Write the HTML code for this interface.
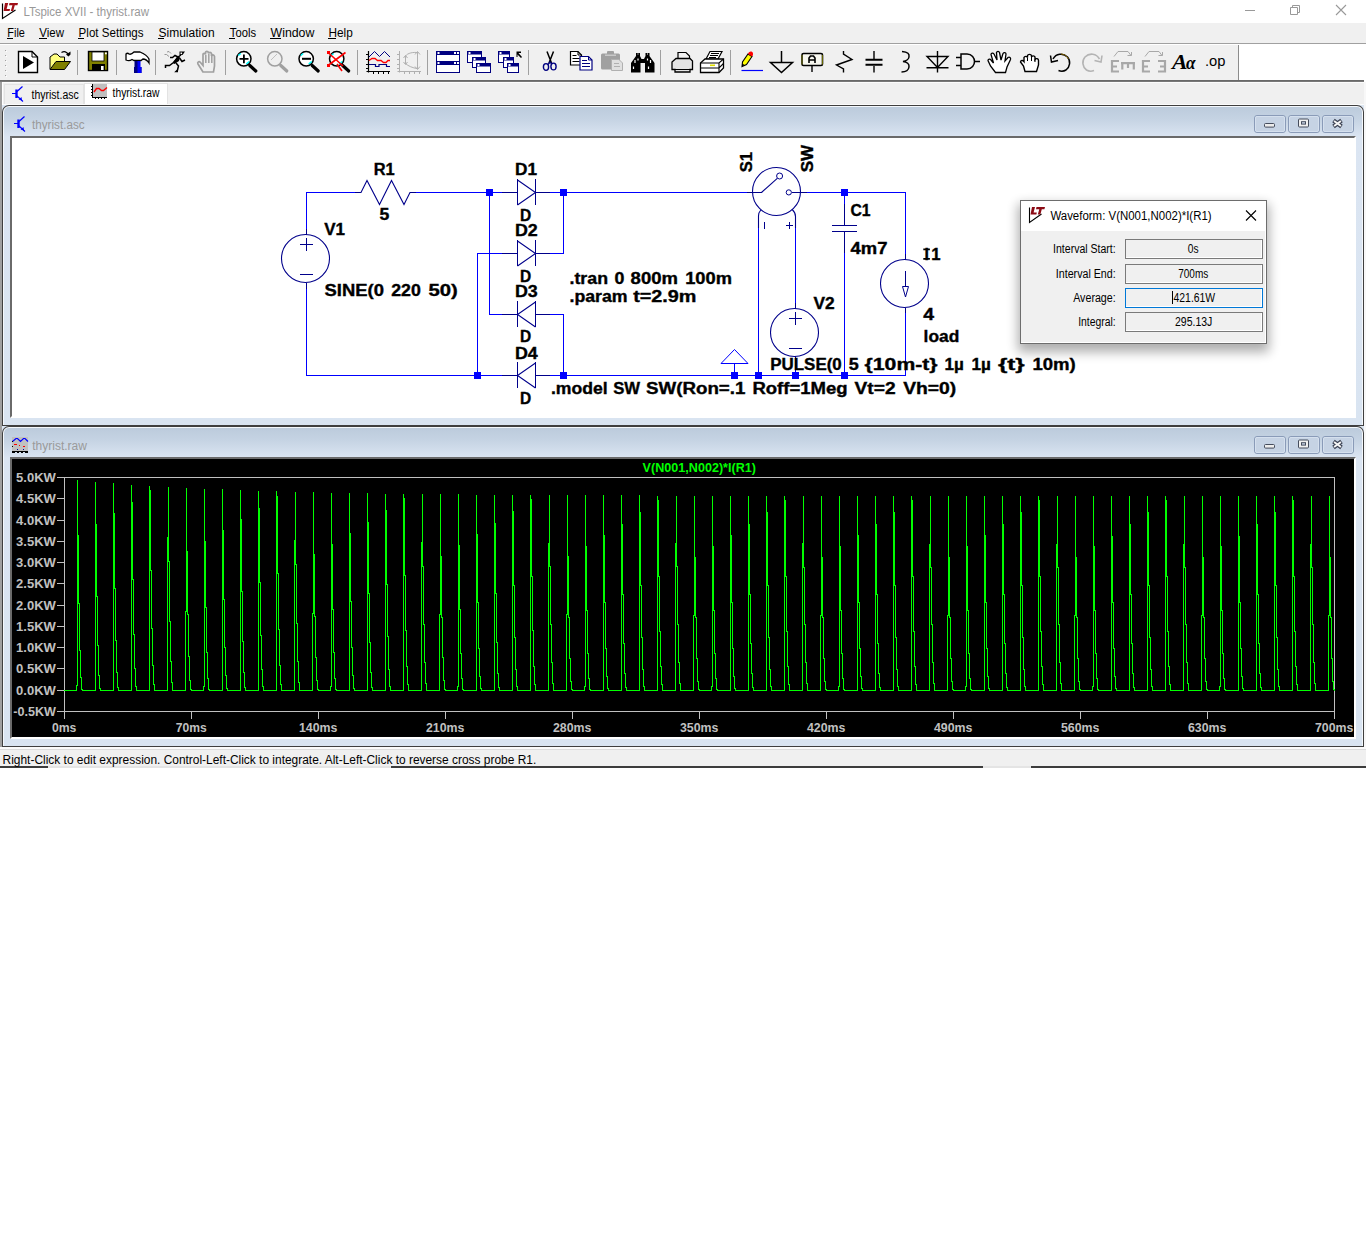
<!DOCTYPE html>
<html><head><meta charset="utf-8"><title>LTspice XVII - thyrist.raw</title>
<style>
*{box-sizing:border-box;margin:0;padding:0}
html,body{width:1366px;height:1255px;overflow:hidden;background:#fff}
body{position:relative;font-family:"Liberation Sans",sans-serif;font-size:12px;color:#000}
.abs{position:absolute}
.t{position:absolute;white-space:nowrap;line-height:1}
svg{position:absolute;left:0;top:0;overflow:visible}
svg text{font-family:"Liberation Sans",sans-serif}
#titlebar{position:absolute;left:0;top:0;width:1366px;height:23px;background:#fff}
#menubar{position:absolute;left:0;top:23px;width:1366px;height:20px;background:#f0f0f0}
.mi{position:absolute;top:7px;font-size:12.5px;line-height:1;white-space:nowrap}
.mi u{text-decoration:none;border-bottom:1px solid #000;padding-bottom:0px}
#tbar{position:absolute;left:0;top:45px;width:1366px;height:35px;background:#f0f0f0}
#tabs{position:absolute;left:0;top:82px;width:1366px;height:23px;background:#f0f0f0}
#mdi{position:absolute;left:0;top:105px;width:1366px;height:643px;background:#dbe5f2}
.cw{position:absolute;border-radius:7px 7px 0 0}
.cwbtn{position:absolute;top:10px;width:32px;height:17px;border:1px solid #8e9db1;border-radius:3px;background:linear-gradient(#c9d6e6,#c4d2e4)}
.dl{position:absolute;font-size:11px;line-height:1;white-space:nowrap;text-align:right;width:100px}
.df{position:absolute;left:1125px;width:138px;height:20px;border:1px solid #7a7a7a;background:#f0f0f0;font-size:11px;line-height:18px;text-align:center}
</style></head><body>

<div id="titlebar"></div>
<div id="menubar"></div>
<div class="abs" style="left:0;top:43px;width:1366px;height:1px;background:#a0a0a0"></div>
<div class="abs" style="left:0;top:44px;width:1366px;height:1px;background:#fff"></div>
<div id="tbar"></div>
<div class="abs" style="left:1239px;top:45px;width:127px;height:35px;background:#fff"></div>
<div class="abs" style="left:1238px;top:45px;width:1px;height:35px;background:#8c8c8c"></div>
<div class="abs" style="left:0;top:80px;width:1364px;height:1px;background:#696969"></div>
<div class="abs" style="left:0;top:81px;width:1364px;height:1px;background:#787878"></div>
<div id="tabs"></div>
<div class="abs" style="left:4px;top:84px;width:80px;height:20px;background:#f0f0f0;border:1px solid #e3e3e3;border-bottom:none"></div>
<div class="abs" style="left:84px;top:83px;width:84px;height:21px;background:#fff;border:1px solid #e3e3e3;border-bottom:none"></div>
<div class="abs" style="left:2px;top:82px;width:1364px;height:1px;background:#fcfcfc"></div>
<div class="abs" style="left:2px;top:104px;width:1364px;height:1px;background:#fcfcfc"></div>
<div id="mdi"></div>
<!-- outer frame edges of MDI -->
<div class="abs" style="left:0;top:82px;width:2px;height:666px;background:#a0a0a0"></div>
<div class="abs" style="left:2px;top:82px;width:1px;height:23px;background:#fff"></div>
<div class="abs" style="left:1364px;top:82px;width:2px;height:666px;background:#f8f8f8"></div>

<!-- child window 1 -->
<div class="cw" style="left:2px;top:105px;width:1362px;height:321px;background:#3f3f3f"></div>
<div class="cw" style="left:3px;top:106px;width:1360px;height:319px;background:#f4f8fc;border-radius:6px 6px 0 0"></div>
<div class="cw" style="left:4px;top:107px;width:1358px;height:318px;border-radius:5px 5px 0 0;background:linear-gradient(#bccbdc 0px,#c5d3e3 12px,#dbe5f2 30px,#d9e4f1 100%)"></div>
<div class="abs" style="left:10px;top:136px;width:1346px;height:282px;background:#fff;border:2px solid #fff;border-top-color:#6a6a6a;border-left-color:#6a6a6a"></div>
<!-- child window 2 -->
<div class="cw" style="left:2px;top:426px;width:1362px;height:321px;background:#3f3f3f"></div>
<div class="cw" style="left:3px;top:427px;width:1360px;height:319px;background:#f4f8fc;border-radius:6px 6px 0 0"></div>
<div class="cw" style="left:4px;top:428px;width:1358px;height:318px;border-radius:5px 5px 0 0;background:linear-gradient(#bccbdc 0px,#c5d3e3 12px,#dbe5f2 30px,#d9e4f1 100%)"></div>
<div class="abs" style="left:10px;top:457px;width:1346px;height:282px;background:#fff;border:2px solid #fff;border-top-color:#6a6a6a;border-left-color:#6a6a6a"></div>
<div class="abs" style="left:12px;top:459px;width:1342px;height:278px;background:#000"></div>
<!-- bottom of mdi / status bar -->
<div class="abs" style="left:0;top:747px;width:1366px;height:2px;background:#fbfbfb"></div>
<div class="abs" style="left:0;top:749px;width:1366px;height:17px;background:#f0f0f0;border-top:1px solid #dcdcdc"></div>
<div class="abs" style="left:0;top:766px;width:1366px;height:2px;background:#e4e4e4"></div>
<div class="abs" style="left:0;top:766px;width:48px;height:2px;background:#3c3c3c"></div>
<div class="abs" style="left:391px;top:766px;width:592px;height:2px;background:#3c3c3c"></div>
<div class="abs" style="left:1031px;top:766px;width:335px;height:2px;background:#3c3c3c"></div>

<svg width="1366" height="1255" viewBox="0 0 1366 1255">
<g id="title">
<path d="M2.5 3.5 L2.5 18.5 L15.5 10" fill="none" stroke="#000" stroke-width="1.2"/>
<path d="M5 3 L8.2 3 L6.6 9 L10 9 L9.6 11 L3.6 11 Z" fill="#a01018"/>
<path d="M9.5 3 L18 3 L17.4 5.2 L14.8 5.2 L13.2 11 L10.8 11 L12.4 5.2 L9 5.2 Z" fill="#a01018"/>
<text x="23.4" y="15.8" font-size="12" fill="#999" font-weight="normal" text-anchor="start" textLength="125.6" lengthAdjust="spacingAndGlyphs" >LTspice XVII - thyrist.raw</text>
<path d="M1245 10.5 H1255" stroke="#999" stroke-width="1"/>
<path d="M1290.5 7.5 H1297.5 V14.5 H1290.5 Z M1292.5 7.5 V5.5 H1299.5 V12.5 H1297.5" fill="none" stroke="#999" stroke-width="1"/>
<path d="M1336 5 L1346 15 M1346 5 L1336 15" stroke="#999" stroke-width="1.1"/>
</g>
<text x="7.3" y="37" font-size="12.5" fill="#000" font-weight="normal" text-anchor="start" textLength="17.6" lengthAdjust="spacingAndGlyphs" >File</text>
<rect x="7" y="38" width="6" height="1" fill="#000" shape-rendering="crispEdges"/>
<text x="39.3" y="37" font-size="12.5" fill="#000" font-weight="normal" text-anchor="start" textLength="24.7" lengthAdjust="spacingAndGlyphs" >View</text>
<rect x="39" y="38" width="8" height="1" fill="#000" shape-rendering="crispEdges"/>
<text x="78.6" y="37" font-size="12.5" fill="#000" font-weight="normal" text-anchor="start" textLength="65.0" lengthAdjust="spacingAndGlyphs" >Plot Settings</text>
<rect x="78" y="38" width="6" height="1" fill="#000" shape-rendering="crispEdges"/>
<text x="158.5" y="37" font-size="12.5" fill="#000" font-weight="normal" text-anchor="start" textLength="56.1" lengthAdjust="spacingAndGlyphs" >Simulation</text>
<rect x="158" y="38" width="6" height="1" fill="#000" shape-rendering="crispEdges"/>
<text x="229.8" y="37" font-size="12.5" fill="#000" font-weight="normal" text-anchor="start" textLength="26.2" lengthAdjust="spacingAndGlyphs" >Tools</text>
<rect x="229" y="38" width="6" height="1" fill="#000" shape-rendering="crispEdges"/>
<text x="270.5" y="37" font-size="12.5" fill="#000" font-weight="normal" text-anchor="start" textLength="43.9" lengthAdjust="spacingAndGlyphs" >Window</text>
<rect x="270" y="38" width="11" height="1" fill="#000" shape-rendering="crispEdges"/>
<text x="328.5" y="37" font-size="12.5" fill="#000" font-weight="normal" text-anchor="start" textLength="24.3" lengthAdjust="spacingAndGlyphs" >Help</text>
<rect x="328" y="38" width="8" height="1" fill="#000" shape-rendering="crispEdges"/>
<rect x="5" y="50" width="1" height="1" fill="#a0a0a0"/><rect x="6" y="51" width="1" height="1" fill="#fff"/>
<rect x="5" y="55" width="1" height="1" fill="#a0a0a0"/><rect x="6" y="56" width="1" height="1" fill="#fff"/>
<rect x="5" y="60" width="1" height="1" fill="#a0a0a0"/><rect x="6" y="61" width="1" height="1" fill="#fff"/>
<rect x="5" y="65" width="1" height="1" fill="#a0a0a0"/><rect x="6" y="66" width="1" height="1" fill="#fff"/>
<rect x="5" y="70" width="1" height="1" fill="#a0a0a0"/><rect x="6" y="71" width="1" height="1" fill="#fff"/>
<rect x="5" y="75" width="1" height="1" fill="#a0a0a0"/><rect x="6" y="76" width="1" height="1" fill="#fff"/>
<rect x="77" y="50" width="1" height="25" fill="#a0a0a0"/>
<rect x="116" y="50" width="1" height="25" fill="#a0a0a0"/>
<rect x="155" y="50" width="1" height="25" fill="#a0a0a0"/>
<rect x="225" y="50" width="1" height="25" fill="#a0a0a0"/>
<rect x="357" y="50" width="1" height="25" fill="#a0a0a0"/>
<rect x="427" y="50" width="1" height="25" fill="#a0a0a0"/>
<rect x="528" y="50" width="1" height="25" fill="#a0a0a0"/>
<rect x="660" y="50" width="1" height="25" fill="#a0a0a0"/>
<rect x="730" y="50" width="1" height="25" fill="#a0a0a0"/>
<g transform="translate(18,51)"><path d="M0.5 0.5 H14 L19.5 6 V21.5 H0.5 Z" fill="#fff" stroke="#000" stroke-width="1.4"/><path d="M14 0.5 V6 H19.5" fill="none" stroke="#000" stroke-width="1"/><path d="M5 5 L16 11.5 L5 18 Z" fill="#000"/></g>
<g transform="translate(49,51)"><path d="M1 18 V6 L5 3 H8 L11 6 H15.5 V10" fill="#ffff80" stroke="#000" stroke-width="1"/><path d="M1 18.5 L7 10.5 H21.5 L15.5 18.5 Z" fill="#808000" stroke="#000" stroke-width="1"/><path d="M12.5 1.5 C15 0,18 0.5,19.5 4" fill="none" stroke="#000" stroke-width="1.2"/><path d="M17 3.5 H21.5 V0.5 Z M21.5 3.5 L19.5 5.5 L17 3.5" fill="#000"/></g>
<g transform="translate(88,51)"><rect x="0.5" y="0.5" width="19" height="19" fill="#808000" stroke="#000" stroke-width="1.4"/><rect x="4" y="1" width="12" height="9" fill="#fff" stroke="#000" stroke-width="0.8"/><rect x="4" y="13" width="13" height="6.5" fill="#000"/><rect x="13" y="15" width="2.6" height="4" fill="#fff"/><rect x="17" y="1.5" width="1.8" height="1.8" fill="#fff"/></g>
<g transform="translate(125,51)"><path d="M1 3 C2 2,3 2,4 3 C6 4,7 3,9 1 H15 C20 3,23 6,24 8 V12 C22 9,20 8,18 8 L16 9.5 H9 L7 8.5 C5 10,3 10,1 9 Z" fill="#fff" stroke="#000" stroke-width="1.3"/><rect x="9.5" y="10" width="3.5" height="12" fill="#000080"/><rect x="12.5" y="10" width="3" height="12" fill="#0000ff"/><rect x="9" y="16" width="7.5" height="6" fill="#000080"/><rect x="12.5" y="16" width="4" height="6" fill="#0000ff"/></g>
<g transform="translate(164.5,51)"><path d="M15 0.5 H20.5 L18 4 H15 Z" fill="#000"/><rect x="16" y="1.5" width="1.6" height="1.6" fill="#fff"/><path d="M16.5 4 L13.5 6 L9 11.5 L5 14.5 L1 14.5 V17 M13.5 6 L10.5 4.5 L8 6.5 H5.5 M15 7 L17.5 10.5 L20.5 9 M11.5 12 L14 15 L13 19 L11.5 20.5 H13.5" fill="none" stroke="#000" stroke-width="1.5"/><path d="M12.5 6 L15.5 5.5 L14.5 10 L10 13 L8.5 12 Z" fill="#000"/><path d="M2.5 1 L4.5 0.5 L6.5 2.5 M0 3.5 L2 3.5 L4.5 5.5" fill="none" stroke="#808080" stroke-width="0.8"/></g>
<g transform="translate(197,51)"><path d="M6 21 L1 13 C0 11,2 10,3.5 11.5 L6 14.5 V3.5 C6 2,8 2,8.5 3.5 V1.5 C8.5 0,11 0,11.5 1.5 V2.5 C12 1,14 1,14.5 2.5 V5 C15 3.5,17 3.5,17.5 5.5 V15 L16.5 21 Z" fill="none" stroke="#a0a0a0" stroke-width="1.7"/><path d="M8.8 4 V12 M11.8 3 V12 M14.8 4.5 V12" stroke="#a0a0a0" stroke-width="1.5"/></g>
<circle cx="243.8" cy="58.8" r="7.2" fill="#fff" stroke="#000" stroke-width="1.5"/><path d="M238.3 55.5 L240.8 53.5 M246.3 64 L249.3 61.5" stroke="#00ffff" stroke-width="1.6"/><path d="M249.8 65.5 L255.8 71" stroke="#000" stroke-width="3.2" stroke-linecap="round"/><path d="M239.5 58.8 H248.5 M243.9 54.5 V63.2" stroke="#000" stroke-width="1.8"/>
<circle cx="274.8" cy="58.8" r="7.2" fill="#f0f0f0" stroke="#a0a0a0" stroke-width="1.5"/><path d="M280.8 65.5 L286.8 71" stroke="#a0a0a0" stroke-width="3.2" stroke-linecap="round"/><path d="M271 60 L277 54" stroke="#c0c0c0" stroke-width="1"/>
<circle cx="306.2" cy="58.8" r="7.2" fill="#fff" stroke="#000" stroke-width="1.5"/><path d="M300.7 55.5 L303.2 53.5 M308.7 64 L311.7 61.5" stroke="#00ffff" stroke-width="1.6"/><path d="M312.2 65.5 L318.2 71" stroke="#000" stroke-width="3.2" stroke-linecap="round"/><path d="M302 58.8 H311" stroke="#000" stroke-width="2"/>
<circle cx="336.7" cy="58.8" r="7.2" fill="#fff" stroke="#000" stroke-width="1.5"/><path d="M331.2 55.5 L333.7 53.5 M339.2 64 L342.2 61.5" stroke="#00ffff" stroke-width="1.6"/><path d="M342.7 65.5 L348.7 71" stroke="#000" stroke-width="3.2" stroke-linecap="round"/><path d="M328 52.5 L343 66 M345.5 52.5 L328 65.5 M337 64 L342 71" stroke="#ff0000" stroke-width="1.6"/><rect x="327" y="51" width="3" height="3" fill="#f00"/><rect x="327" y="64" width="3" height="3" fill="#f00"/>
<g transform="translate(366,51)"><path d="M2.5 0 V21.5 M0.5 20.5 H24" stroke="#000" stroke-width="1.2" fill="none"/><path d="M0 3.5h2M0 8.5h2M0 13.5h2M0 17.5h2M7.5 21v2M12.5 21v2M17.5 21v2M22.5 21v2" stroke="#000" stroke-width="1"/><path d="M3 6 L8.5 0.5 L13.5 5.5 L18.5 0.5 L24 6" stroke="#000080" stroke-width="1" fill="none"/><path d="M3 9.5 L6 7.5 H9 L11.5 9.5 H15 L17.5 11.5 H20 L22 9.5 H24" stroke="#ff0000" stroke-width="1.3" fill="none"/><path d="M3 13.5 H9.5 V15.5 H13 V13.5 H20.5 V15.5 H24" stroke="#000080" stroke-width="1.2" fill="none"/></g>
<g transform="translate(397,51)"><path d="M2.5 0 V21.5 M0.5 20.5 H24" stroke="#b0b0b0" stroke-width="1" fill="none"/><path d="M0 3.5h2M0 8.5h2M0 13.5h2M0 17.5h2M7.5 21v2M12.5 21v2M17.5 21v2M22.5 21v2" stroke="#b0b0b0" stroke-width="1"/><path d="M20.5 1 V18 M18 3.5 L20.5 0.5 L23 3.5 M18 15.5 L20.5 18.5 L23 15.5 M8.5 5 V13 M6.5 7 L8.5 4.5 L10.5 7 M6.5 11 L8.5 13.5 L10.5 11 M20 1.5 C14 1,9 3,8 6 M8.5 12.5 C11 15,16 17,20 17.5" stroke="#b0b0b0" stroke-width="1" fill="none"/></g>
<g transform="translate(436,51)"><rect x="0.5" y="0.5" width="23" height="10" fill="#fff" stroke="#000080" stroke-width="1"/><rect x="0" y="0" width="24" height="4" fill="#000080"/><rect x="0.5" y="10.5" width="23" height="11" fill="#fff" stroke="#000080" stroke-width="1"/><rect x="0" y="10" width="24" height="4" fill="#000080"/><rect x="1.5" y="1" width="2" height="2" fill="#fff"/><rect x="18" y="1" width="2" height="2" fill="#fff"/><rect x="21" y="1" width="2" height="2" fill="#fff"/><rect x="1.5" y="11" width="2" height="2" fill="#fff"/><rect x="18" y="11" width="2" height="2" fill="#fff"/><rect x="21" y="11" width="2" height="2" fill="#fff"/></g>
<g transform="translate(467,51)"><rect x="0.5" y="0.5" width="14" height="11" fill="#fff" stroke="#000080" stroke-width="1"/><rect x="0" y="0" width="15" height="3.5" fill="#000080"/><rect x="5.5" y="6.5" width="13" height="10" fill="#fff" stroke="#000080" stroke-width="1"/><rect x="5" y="6" width="14" height="3.5" fill="#000080"/><rect x="9.5" y="12.5" width="14" height="9" fill="#fff" stroke="#000080" stroke-width="1"/><rect x="9" y="12" width="15" height="3.5" fill="#000080"/><rect x="1.5" y="1" width="2" height="2" fill="#fff"/><rect x="6.5" y="7" width="2" height="2" fill="#fff"/><rect x="10.5" y="13" width="2" height="2" fill="#fff"/></g>
<g transform="translate(498,51)"><rect x="0.5" y="0.5" width="11" height="11" fill="#fff" stroke="#000080" stroke-width="1"/><rect x="0" y="0" width="12" height="3.5" fill="#000080"/><rect x="5.5" y="6.5" width="10" height="10" fill="#fff" stroke="#000080" stroke-width="1"/><rect x="5" y="6" width="11" height="3.5" fill="#000080"/><rect x="9.5" y="12.5" width="11" height="9" fill="#fff" stroke="#000080" stroke-width="1"/><rect x="9" y="12" width="12" height="3.5" fill="#000080"/><rect x="1.5" y="1" width="2" height="2" fill="#fff"/><rect x="6.5" y="7" width="2" height="2" fill="#fff"/><rect x="10.5" y="13" width="2" height="2" fill="#fff"/><path d="M18.5 0.5 H23 V2 H20.5 L24 6 L23 7 L19.5 3.5 V6 H18.5 Z" fill="#000"/></g>
<g transform="translate(543,51)"><path d="M4 0.5 L8.5 12 M10.5 0.5 L6 12" stroke="#000" stroke-width="1.5" fill="none"/><ellipse cx="3" cy="16" rx="2.6" ry="3.4" fill="none" stroke="#000080" stroke-width="1.4"/><ellipse cx="10.5" cy="15.5" rx="2.6" ry="3.4" fill="none" stroke="#000080" stroke-width="1.4"/><path d="M5 13.5 L7 11 L9 13" stroke="#000080" stroke-width="1.3" fill="none"/></g>
<g transform="translate(570,51)"><path d="M0.5 0.5 H8 L11.5 4 V14.0 H0.5 Z" fill="#fff" stroke="#000" stroke-width="1.2"/><path d="M8 0.5 V4 H11.5" fill="none" stroke="#000" stroke-width="1"/><path d="M2.5 4.5 h4 M2.5 7.5 h7 M2.5 10.5 h7" stroke="#000" stroke-width="1"/><path d="M10.0 5.5 H18.5 L22.0 9 V19.0 H10.0 Z" fill="#fff" stroke="#000080" stroke-width="1.2"/><path d="M18.5 5.5 V9 H22.0" fill="none" stroke="#000080" stroke-width="1"/><path d="M12.0 9.5 h5 M12.0 12.5 h8 M12.0 15.5 h8" stroke="#000080" stroke-width="1"/></g>
<g transform="translate(601,51)"><rect x="0" y="2.5" width="19" height="16" rx="1.5" fill="#a0a0a0"/><rect x="6" y="0" width="7" height="4" rx="1" fill="#a0a0a0"/><rect x="4" y="3.5" width="11" height="1.5" fill="#c8c8c8"/><path d="M10.5 8.5 H18 L21.5 12 V19.5 H10.5 Z" fill="#e0e0e0" stroke="#b0b0b0" stroke-width="1"/><path d="M13 12.5 h5 M13 15.5 h6" stroke="#b0b0b0" stroke-width="1"/></g>
<g transform="translate(631,52)"><path d="M5 1 H9 V4 L10.5 7 H13 L14.5 4 V1 H18.5 V4 L23.5 11 V20.5 H14 V11 H9.5 V20.5 H0 V11 L5 4 Z" fill="#000"/><path d="M6.5 2h1M16 2h1M4 8v3M7 6.5v2M16.5 6.5v2M19.5 8v3M2.5 14.5v2.5M17.5 14.5v2.5" stroke="#fff" stroke-width="1.2"/></g>
<g transform="translate(671,52)"><path d="M7 0.5 H15 L18.5 4 V8 H7 Z" fill="#f2f2f2" stroke="#000" stroke-width="1.2"/><path d="M1 17.5 V10 L5 6.5 H19 L21.5 9 V17.5 H19 V20 H4 V17.5 Z" fill="#e4e4e4" stroke="#000" stroke-width="1.3"/><path d="M4 17.5 H19" stroke="#000" stroke-width="1"/></g>
<g transform="translate(700,51)"><path d="M6 8 L10 0.5 H22 L18 8 Z" fill="#fff" stroke="#000" stroke-width="1.2"/><path d="M11 2.5h8M10 4.5h8M9 6.5h7" stroke="#000" stroke-width="1"/><path d="M0.5 21.5 V12 L5 8 H23.5 V17 L19 21.5 Z" fill="#fff" stroke="#000" stroke-width="1.3"/><path d="M0.5 12 H19 L23.5 8 M19 12 V21.5 M0.5 17 H19 L23.5 12.5" fill="none" stroke="#000" stroke-width="1.1"/><rect x="10" y="13.5" width="5" height="1.6" fill="#e0e000"/></g>
<g transform="translate(741,51)"><path d="M0.5 19.5 H22" stroke="#0000ff" stroke-width="1.2"/><path d="M1 15.5 L1.5 11 L7 3 L11 5.5 L5.5 13.5 Z" fill="#ffff00" stroke="#000" stroke-width="1.1"/><path d="M1 15.5 L1.3 12.5 L3.5 14 Z" fill="#000"/><path d="M7 3 C7.5 0,11.5 -0.5,12 2.5 C12.2 4,11.5 5,11 5.5 Z" fill="#ff0000"/></g>
<g transform="translate(770,51)"><path d="M11.5 0 V11 M0.5 11.5 H22.5 L11.5 21.5 Z" stroke="#000" fill="none" stroke-width="1.5"/></g>
<g transform="translate(801,51)"><rect x="1" y="2.5" width="20.5" height="12" rx="1.5" fill="#f8f8f0" stroke="#000" stroke-width="1.6"/><path d="M1 4 V13.5 M21.5 4 V13.5" stroke="#808000" stroke-width="0.8"/><path d="M11 14.5 V21" stroke="#000" fill="none" stroke-width="1.4"/><path d="M8 12 V7 L9.5 5 H12.5 L14 7 V12 M8 9 H14" stroke="#000" fill="none" stroke-width="1.6"/></g>
<g transform="translate(835,51)"><path d="M8.5 0 V3 L17 8.5 L1.5 14 L8.5 18 V21.5" stroke="#000" fill="none" stroke-width="1.4"/></g>
<g transform="translate(865,51)"><path d="M9 0 V8 M9 15 V21.5" stroke="#000" fill="none" stroke-width="1.4"/><path d="M0.5 8.7 H17.5 M0.5 13.8 H17.5" stroke="#000" fill="none" stroke-width="2"/></g>
<g transform="translate(900,51)"><path d="M2 0.5 C8 1,9.5 3,9 6 C8.5 9,6 10,3 10.5 C7 11,9.5 13,9 16 C8.5 19.5,5 21,1.5 21" stroke="#000" fill="none" stroke-width="1.5"/></g>
<g transform="translate(926,51)"><path d="M11.5 0 V21.5 M1 5.5 H22 L11.5 16.5 Z M0.5 16.7 H22.5" stroke="#000" fill="none" stroke-width="1.4"/></g>
<g transform="translate(956,51)"><path d="M0 6.5 H5 M0 14.5 H5 M18 10.5 H24" stroke="#000" fill="none" stroke-width="1.5"/><path d="M5 3 H11 C16 3,18.5 7,18.5 10.5 C18.5 14,16 18,11 18 H5 Z" fill="#f0f0f0" stroke="#000" stroke-width="1.5"/></g>
<g transform="translate(987.5,51)"><path d="M8 21.5 L3 15 L0.5 9.5 C0.5 8,2.5 7.5,3.5 9 L6 12 L3.5 3.5 C3.5 2,5.5 1.5,6.5 3 L9.5 9 L9 1.5 C9.5 0,11.5 0,12 1.5 L13.5 9 L15.5 2.5 C16.5 1,18.5 1.5,18.5 3 L17.5 10 L20.5 6.5 C22 5.5,23.5 7,23 8.5 L19.5 16 L18 21.5 Z" fill="#fff" stroke="#000" stroke-width="1.3"/></g>
<g transform="translate(1020,52)"><path d="M5 19.5 L3.5 14 L0.5 10 C0.5 8,3 8,4 9.5 V5.5 C4.5 4,7 4,7.5 5.5 V3.5 C8 2,11 2,11.5 3.5 V5 C12 3.5,14.5 3.5,15 5 V7.5 C16 6,18.5 6.5,18.5 8.5 V13 L16.5 19.5 Z" fill="#fff" stroke="#000" stroke-width="1.4"/><path d="M7.5 5.5 V9 M11.5 5 V9 M15 7.5 V10" stroke="#000" stroke-width="1"/></g>
<g transform="translate(1050,51)"><path d="M3 8 C6 2.5,13 1.5,17.5 6 C21 10,20 16,16 19 C13.5 20.5,11 20.5,8.5 19.5" fill="none" stroke="#000" stroke-width="1.5"/><path d="M0.5 4.5 L1.5 11 L8 9.5" fill="none" stroke="#000" stroke-width="1.5"/><path d="M11 3 C14 3,17 5,18.5 8" fill="none" stroke="#806000" stroke-width="1"/></g>
<g transform="translate(1082,51)"><path d="M17.5 8 C14.5 2.5,7.5 1.5,3 6 C-0.5 10,0.5 16,4.5 19 C7 20.5,9.5 20.5,12 19.5" fill="none" stroke="#b4b4b4" stroke-width="1.6"/><path d="M20 4.5 L19 11 L12.5 9.5" fill="none" stroke="#b4b4b4" stroke-width="1.6"/></g>
<g transform="translate(1110,51)"><path d="M4 5.5 L8 0.5 H18 L21 4.5 M17.5 4.5 H21.5 V1" fill="none" stroke="#a8a8a8" stroke-width="1"/><path d="M2 9 V21.5 M1 10 H9 M1 15.5 H7 M1 20.5 H9" stroke="#a8a8a8" stroke-width="2.2" fill="none"/><path d="M11 12.2 H25 M12.3 11.2 V18.5 M18 11.2 V17 M23.8 11.2 V18.5" stroke="#a8a8a8" stroke-width="2.2" fill="none"/></g>
<g transform="translate(1142,51)"><path d="M3 5.5 L7 0.5 H17 L20 4.5 M16.5 4.5 H20.5 V1" fill="none" stroke="#a8a8a8" stroke-width="1"/><path d="M1 9 V21.5 M0 10 H8 M0 15.5 H6 M0 20.5 H8" stroke="#a8a8a8" stroke-width="2.2" fill="none"/><path d="M23 9 V21.5 M24 10 H16 M24 15.5 H18 M24 20.5 H16" stroke="#a8a8a8" stroke-width="2.2" fill="none"/></g>
<text x="1172" y="69.4" font-style="italic" font-weight="bold" font-size="22" textLength="15.5" lengthAdjust="spacingAndGlyphs" style="font-family:'Liberation Serif',serif">A</text>
<text x="1186" y="69.4" font-style="italic" font-weight="bold" font-size="18" textLength="9.5" lengthAdjust="spacingAndGlyphs" style="font-family:'Liberation Serif',serif">α</text>
<text x="1205" y="65.7" font-size="14.5" fill="#000" font-weight="normal" text-anchor="start" textLength="20.5" lengthAdjust="spacingAndGlyphs" >.op</text>
<g transform="translate(12,86)" stroke="#0000ff" fill="none"><path d="M0 7.5 H4" stroke-width="1"/><path d="M4.5 3.5 V12" stroke-width="2.4"/><path d="M5 5.5 L10.5 0.5 M5 10 L11 15.5" stroke-width="1.2"/><path d="M6.5 13.5 L9.5 11 L10 14.5 Z" fill="#0000ff" stroke="none"/></g>
<text x="31.5" y="98.7" font-size="12" fill="#000" font-weight="normal" text-anchor="start" textLength="47.2" lengthAdjust="spacingAndGlyphs" >thyrist.asc</text>
<g transform="translate(91,84)"><rect x="2" y="0" width="14" height="13" fill="#c0c0c0"/><path d="M1.5 0 V14 M1 13.5 H16" stroke="#000" stroke-width="1" fill="none"/><path d="M0 2.5h1M0 5.5h1M0 8.5h1M0 11.5h1M4.5 14v1M7.5 14v1M10.5 14v1M13.5 14v1" stroke="#000" stroke-width="1"/><path d="M3 8 L5.5 4.5 L8 4.5 L10.5 6.5 L12.5 6.5 L16 3.5" stroke="#ff0000" stroke-width="1.4" fill="none"/></g>
<text x="112.6" y="96.7" font-size="12" fill="#000" font-weight="normal" text-anchor="start" textLength="46.8" lengthAdjust="spacingAndGlyphs" >thyrist.raw</text>
<g transform="translate(14,116)" stroke="#0000ff" fill="none"><path d="M0 7.5 H4" stroke-width="1"/><path d="M4.5 3.5 V12" stroke-width="2.4"/><path d="M5 5.5 L10.5 0.5 M5 10 L11 15.5" stroke-width="1.2"/><path d="M6.5 13.5 L9.5 11 L10 14.5 Z" fill="#0000ff" stroke="none"/></g>
<text x="32" y="128.6" font-size="12" fill="#9a9a9a" font-weight="normal" text-anchor="start" textLength="52.6" lengthAdjust="spacingAndGlyphs" >thyrist.asc</text>
<g transform="translate(12,437)"><rect x="0" y="0" width="16" height="14" fill="#c0c0c0"/><path d="M0.5 4.5 L4 1.5 L5.5 1.5 L8.5 4.5 L11.5 1.5 L13 1.5 L16 4.5" stroke="#0000ff" stroke-width="1.2" fill="none"/><rect x="0" y="4" width="1" height="1" fill="#000"/><rect x="0" y="9" width="1" height="1" fill="#000"/><rect x="2" y="7" width="3" height="1" fill="#f00"/><rect x="7" y="8" width="1" height="1" fill="#f00"/><rect x="11" y="9" width="2" height="1" fill="#f00"/><rect x="5" y="12" width="1" height="1" fill="#00a"/><rect x="11" y="12" width="1" height="1" fill="#00a"/><rect x="0" y="14" width="16" height="1" fill="#000"/><path d="M0 15.5h3M5 15.5h2M9 15.5h2M13 15.5h3" stroke="#000" stroke-width="1"/></g>
<text x="32.2" y="450" font-size="12" fill="#9a9a9a" font-weight="normal" text-anchor="start" textLength="54.8" lengthAdjust="spacingAndGlyphs" >thyrist.raw</text>
<rect x="1254.5" y="115.5" width="31" height="17" rx="2.5" fill="#c6d3e4" stroke="#8a9bb8"/><rect x="1255.5" y="116.5" width="29" height="15" rx="1.5" fill="none" stroke="#d5e0ee" stroke-width="1"/><rect x="1264.5" y="123.5" width="10" height="3.6" rx="1" fill="#ececec" stroke="#454c5c" stroke-width="1"/><rect x="1288.5" y="115.5" width="31" height="17" rx="2.5" fill="#c6d3e4" stroke="#8a9bb8"/><rect x="1289.5" y="116.5" width="29" height="15" rx="1.5" fill="none" stroke="#d5e0ee" stroke-width="1"/><rect x="1298.5" y="119" width="10" height="8" rx="1" fill="#f0f0f0" stroke="#454c5c" stroke-width="1"/><rect x="1301.5" y="121.7" width="4" height="2.4" fill="#c6d3e4" stroke="#454c5c" stroke-width="1"/><rect x="1322.5" y="115.5" width="31" height="17" rx="2.5" fill="#c6d3e4" stroke="#8a9bb8"/><rect x="1323.5" y="116.5" width="29" height="15" rx="1.5" fill="none" stroke="#d5e0ee" stroke-width="1"/><path d="M1333.5 120.5 L1341.5 126.5 M1341.5 120.5 L1333.5 126.5" stroke="#3a4152" stroke-width="4.2"/><path d="M1334.1 120.95 L1340.9 126.05 M1340.9 120.95 L1334.1 126.05" stroke="#f4f4f4" stroke-width="2"/>
<rect x="1254.5" y="436.5" width="31" height="17" rx="2.5" fill="#c6d3e4" stroke="#8a9bb8"/><rect x="1255.5" y="437.5" width="29" height="15" rx="1.5" fill="none" stroke="#d5e0ee" stroke-width="1"/><rect x="1264.5" y="444.5" width="10" height="3.6" rx="1" fill="#ececec" stroke="#454c5c" stroke-width="1"/><rect x="1288.5" y="436.5" width="31" height="17" rx="2.5" fill="#c6d3e4" stroke="#8a9bb8"/><rect x="1289.5" y="437.5" width="29" height="15" rx="1.5" fill="none" stroke="#d5e0ee" stroke-width="1"/><rect x="1298.5" y="440" width="10" height="8" rx="1" fill="#f0f0f0" stroke="#454c5c" stroke-width="1"/><rect x="1301.5" y="442.7" width="4" height="2.4" fill="#c6d3e4" stroke="#454c5c" stroke-width="1"/><rect x="1322.5" y="436.5" width="31" height="17" rx="2.5" fill="#c6d3e4" stroke="#8a9bb8"/><rect x="1323.5" y="437.5" width="29" height="15" rx="1.5" fill="none" stroke="#d5e0ee" stroke-width="1"/><path d="M1333.5 441.5 L1341.5 447.5 M1341.5 441.5 L1333.5 447.5" stroke="#3a4152" stroke-width="4.2"/><path d="M1334.1 441.95 L1340.9 447.05 M1340.9 441.95 L1334.1 447.05" stroke="#f4f4f4" stroke-width="2"/>
<text x="2.6" y="763.6" font-size="12" fill="#000" font-weight="normal" text-anchor="start" textLength="533.6" lengthAdjust="spacingAndGlyphs" >Right-Click to edit expression. Control-Left-Click to integrate. Alt-Left-Click to reverse cross probe R1.</text>
<g shape-rendering="crispEdges" stroke-width="1" fill="none">
<line x1="306.5" y1="192" x2="306.5" y2="229" stroke="#0000ff"/>
<line x1="306.5" y1="289" x2="306.5" y2="376" stroke="#0000ff"/>
<line x1="306" y1="192.5" x2="355" y2="192.5" stroke="#0000ff"/>
<line x1="416" y1="192.5" x2="502" y2="192.5" stroke="#0000ff"/>
<line x1="550" y1="192.5" x2="747" y2="192.5" stroke="#0000ff"/>
<line x1="807" y1="192.5" x2="906" y2="192.5" stroke="#0000ff"/>
<line x1="905.5" y1="192" x2="905.5" y2="254" stroke="#0000ff"/>
<line x1="905.5" y1="313" x2="905.5" y2="376" stroke="#0000ff"/>
<line x1="306" y1="375.5" x2="502" y2="375.5" stroke="#0000ff"/>
<line x1="550" y1="375.5" x2="906" y2="375.5" stroke="#0000ff"/>
<line x1="489.5" y1="192" x2="489.5" y2="315" stroke="#0000ff"/>
<line x1="489" y1="314.5" x2="502" y2="314.5" stroke="#0000ff"/>
<line x1="563.5" y1="192" x2="563.5" y2="254" stroke="#0000ff"/>
<line x1="550" y1="253.5" x2="564" y2="253.5" stroke="#0000ff"/>
<line x1="477.5" y1="253" x2="477.5" y2="376" stroke="#0000ff"/>
<line x1="477" y1="253.5" x2="502" y2="253.5" stroke="#0000ff"/>
<line x1="550" y1="314.5" x2="564" y2="314.5" stroke="#0000ff"/>
<line x1="563.5" y1="314" x2="563.5" y2="376" stroke="#0000ff"/>
<line x1="758.5" y1="228" x2="758.5" y2="376" stroke="#0000ff"/>
<line x1="795.5" y1="228" x2="795.5" y2="303" stroke="#0000ff"/>
<line x1="795.5" y1="368" x2="795.5" y2="376" stroke="#0000ff"/>
<line x1="844.5" y1="192" x2="844.5" y2="204" stroke="#0000ff"/>
<line x1="844.5" y1="253" x2="844.5" y2="376" stroke="#0000ff"/>
<line x1="734.5" y1="363" x2="734.5" y2="376" stroke="#0000ff"/>
<path d="M734.5 349.5 L721 363.5 H748 Z" stroke="#0000ff" fill="none" shape-rendering="auto"/>
<rect x="486.0" y="189.0" width="7" height="7" fill="#0000ff"/>
<rect x="560.0" y="189.0" width="7" height="7" fill="#0000ff"/>
<rect x="841.0" y="189.0" width="7" height="7" fill="#0000ff"/>
<rect x="474.0" y="372.0" width="7" height="7" fill="#0000ff"/>
<rect x="560.0" y="372.0" width="7" height="7" fill="#0000ff"/>
<rect x="731.0" y="372.0" width="7" height="7" fill="#0000ff"/>
<rect x="755.0" y="372.0" width="7" height="7" fill="#0000ff"/>
<rect x="792.0" y="372.0" width="7" height="7" fill="#0000ff"/>
<rect x="841.0" y="372.0" width="7" height="7" fill="#0000ff"/>
<path d="M355 192.5 H361 L367 180.5 L379.5 204.5 L391.5 180.5 L404 204.5 L410 192.5 H416" stroke="#00008b" fill="none" shape-rendering="auto" stroke-width="1.1"/>
<circle cx="305.5" cy="258.5" r="24" stroke="#00008b" fill="none" shape-rendering="auto" stroke-width="1.1"/>
<line x1="306.5" y1="229.0" x2="306.5" y2="234.5" stroke="#00008b"/>
<line x1="306.5" y1="282.5" x2="306.5" y2="289.0" stroke="#00008b"/>
<line x1="300.0" y1="244.5" x2="313.0" y2="244.5" stroke="#00008b"/>
<line x1="306.5" y1="238.0" x2="306.5" y2="251.0" stroke="#00008b"/>
<line x1="300.0" y1="274.5" x2="313.0" y2="274.5" stroke="#00008b"/>
<circle cx="794.5" cy="332.5" r="24" stroke="#00008b" fill="none" shape-rendering="auto" stroke-width="1.1"/>
<line x1="795.5" y1="303.0" x2="795.5" y2="308.5" stroke="#00008b"/>
<line x1="795.5" y1="356.5" x2="795.5" y2="363.0" stroke="#00008b"/>
<line x1="789.0" y1="318.5" x2="802.0" y2="318.5" stroke="#00008b"/>
<line x1="795.5" y1="312.0" x2="795.5" y2="325.0" stroke="#00008b"/>
<line x1="789.0" y1="348.5" x2="802.0" y2="348.5" stroke="#00008b"/>
<line x1="795.5" y1="356" x2="795.5" y2="368" stroke="#00008b"/>
<line x1="502" y1="192.5" x2="517" y2="192.5" stroke="#00008b"/>
<line x1="536" y1="192.5" x2="550" y2="192.5" stroke="#00008b"/>
<line x1="517.5" y1="179.0" x2="517.5" y2="205.0" stroke="#00008b"/>
<line x1="535.5" y1="179.0" x2="535.5" y2="205.0" stroke="#00008b"/>
<path d="M517.5 180.0 L535.5 192.5 L517.5 205.0" stroke="#00008b" fill="none" shape-rendering="auto" stroke-width="1.1"/>
<line x1="502" y1="253.5" x2="517" y2="253.5" stroke="#00008b"/>
<line x1="536" y1="253.5" x2="550" y2="253.5" stroke="#00008b"/>
<line x1="517.5" y1="240.0" x2="517.5" y2="266.0" stroke="#00008b"/>
<line x1="535.5" y1="240.0" x2="535.5" y2="266.0" stroke="#00008b"/>
<path d="M517.5 241.0 L535.5 253.5 L517.5 266.0" stroke="#00008b" fill="none" shape-rendering="auto" stroke-width="1.1"/>
<line x1="502" y1="314.5" x2="517" y2="314.5" stroke="#00008b"/>
<line x1="536" y1="314.5" x2="550" y2="314.5" stroke="#00008b"/>
<line x1="517.5" y1="301.0" x2="517.5" y2="327.0" stroke="#00008b"/>
<line x1="535.5" y1="301.0" x2="535.5" y2="327.0" stroke="#00008b"/>
<path d="M535.5 302.0 L517.5 314.5 L535.5 327.0" stroke="#00008b" fill="none" shape-rendering="auto" stroke-width="1.1"/>
<line x1="502" y1="375.5" x2="517" y2="375.5" stroke="#00008b"/>
<line x1="536" y1="375.5" x2="550" y2="375.5" stroke="#00008b"/>
<line x1="517.5" y1="362.0" x2="517.5" y2="388.0" stroke="#00008b"/>
<line x1="535.5" y1="362.0" x2="535.5" y2="388.0" stroke="#00008b"/>
<path d="M535.5 363.0 L517.5 375.5 L535.5 388.0" stroke="#00008b" fill="none" shape-rendering="auto" stroke-width="1.1"/>
<circle cx="776.5" cy="191.5" r="24" stroke="#00008b" fill="none" shape-rendering="auto" stroke-width="1.1"/>
<line x1="747" y1="192.5" x2="761.5" y2="192.5" stroke="#00008b"/>
<line x1="791.5" y1="192.5" x2="807" y2="192.5" stroke="#00008b"/>
<path d="M761.5 192.5 L777.3 178.3" stroke="#00008b" shape-rendering="auto" stroke-width="1.1"/>
<circle cx="779.6" cy="176" r="3" stroke="#00008b" fill="none" shape-rendering="auto"/>
<circle cx="788.8" cy="192.4" r="2.6" stroke="#00008b" fill="none" shape-rendering="auto"/>
<path d="M760.8 210 Q758.5 212.5 758.5 216 V228" stroke="#00008b" fill="none" shape-rendering="auto" stroke-width="1.1"/>
<path d="M792.2 209.5 Q795.5 212.5 795.5 216.5 V228" stroke="#00008b" fill="none" shape-rendering="auto" stroke-width="1.1"/>
<line x1="764.5" y1="222" x2="764.5" y2="229" stroke="#00008b"/>
<line x1="786" y1="225.5" x2="793" y2="225.5" stroke="#00008b"/>
<line x1="789.5" y1="222" x2="789.5" y2="229" stroke="#00008b"/>
<line x1="844.5" y1="204" x2="844.5" y2="225" stroke="#00008b"/>
<line x1="844.5" y1="232" x2="844.5" y2="253" stroke="#00008b"/>
<line x1="832" y1="225.5" x2="857" y2="225.5" stroke="#00008b"/>
<line x1="832" y1="231.5" x2="857" y2="231.5" stroke="#00008b"/>
<circle cx="904.5" cy="283.5" r="24" stroke="#00008b" fill="none" shape-rendering="auto" stroke-width="1.1"/>
<line x1="905.5" y1="254" x2="905.5" y2="259.5" stroke="#00008b"/>
<line x1="905.5" y1="307.5" x2="905.5" y2="313" stroke="#00008b"/>
<line x1="905.5" y1="271" x2="905.5" y2="287" stroke="#00008b"/>
<path d="M902.5 286.5 H908.5 L905.5 297 Z" stroke="#00008b" fill="none" shape-rendering="auto"/>
</g>
<text x="373.7" y="174.7" font-size="15.8" fill="#000" font-weight="bold" text-anchor="start" textLength="21.0" lengthAdjust="spacingAndGlyphs" stroke="#000" stroke-width="0.35">R1</text>
<text x="379.5" y="220.4" font-size="15.8" fill="#000" font-weight="bold" text-anchor="start" textLength="9.8" lengthAdjust="spacingAndGlyphs" stroke="#000" stroke-width="0.35">5</text>
<text x="324.2" y="234.7" font-size="15.8" fill="#000" font-weight="bold" text-anchor="start" textLength="20.8" lengthAdjust="spacingAndGlyphs" stroke="#000" stroke-width="0.35">V1</text>
<text x="324.5" y="295.7" font-size="15.8" fill="#000" font-weight="bold" text-anchor="start" textLength="59.4" lengthAdjust="spacingAndGlyphs" stroke="#000" stroke-width="0.35">SINE(0</text>
<text x="391.2" y="295.7" font-size="15.8" fill="#000" font-weight="bold" text-anchor="start" textLength="29.6" lengthAdjust="spacingAndGlyphs" stroke="#000" stroke-width="0.35">220</text>
<text x="428.4" y="295.7" font-size="15.8" fill="#000" font-weight="bold" text-anchor="start" textLength="29.3" lengthAdjust="spacingAndGlyphs" stroke="#000" stroke-width="0.35">50)</text>
<text x="515" y="174.8" font-size="15.8" fill="#000" font-weight="bold" text-anchor="start" textLength="22" lengthAdjust="spacingAndGlyphs" stroke="#000" stroke-width="0.35">D1</text>
<text x="520.1" y="220.5" font-size="15.8" fill="#000" font-weight="bold" text-anchor="start" textLength="11.2" lengthAdjust="spacingAndGlyphs" stroke="#000" stroke-width="0.35">D</text>
<text x="515" y="236" font-size="15.8" fill="#000" font-weight="bold" text-anchor="start" textLength="22.8" lengthAdjust="spacingAndGlyphs" stroke="#000" stroke-width="0.35">D2</text>
<text x="520.1" y="281.6" font-size="15.8" fill="#000" font-weight="bold" text-anchor="start" textLength="11.2" lengthAdjust="spacingAndGlyphs" stroke="#000" stroke-width="0.35">D</text>
<text x="515" y="297.3" font-size="15.8" fill="#000" font-weight="bold" text-anchor="start" textLength="22.8" lengthAdjust="spacingAndGlyphs" stroke="#000" stroke-width="0.35">D3</text>
<text x="520.1" y="342.4" font-size="15.8" fill="#000" font-weight="bold" text-anchor="start" textLength="11.2" lengthAdjust="spacingAndGlyphs" stroke="#000" stroke-width="0.35">D</text>
<text x="515" y="358.5" font-size="15.8" fill="#000" font-weight="bold" text-anchor="start" textLength="22.8" lengthAdjust="spacingAndGlyphs" stroke="#000" stroke-width="0.35">D4</text>
<text x="520.1" y="403.5" font-size="15.8" fill="#000" font-weight="bold" text-anchor="start" textLength="11.2" lengthAdjust="spacingAndGlyphs" stroke="#000" stroke-width="0.35">D</text>
<text x="569.5" y="283.7" font-size="15.8" fill="#000" font-weight="bold" text-anchor="start" textLength="38.5" lengthAdjust="spacingAndGlyphs" stroke="#000" stroke-width="0.35">.tran</text>
<text x="614.5" y="283.7" font-size="15.8" fill="#000" font-weight="bold" text-anchor="start" textLength="9.9" lengthAdjust="spacingAndGlyphs" stroke="#000" stroke-width="0.35">0</text>
<text x="630.6" y="283.7" font-size="15.8" fill="#000" font-weight="bold" text-anchor="start" textLength="47.3" lengthAdjust="spacingAndGlyphs" stroke="#000" stroke-width="0.35">800m</text>
<text x="685.2" y="283.7" font-size="15.8" fill="#000" font-weight="bold" text-anchor="start" textLength="46.8" lengthAdjust="spacingAndGlyphs" stroke="#000" stroke-width="0.35">100m</text>
<text x="569.5" y="302.3" font-size="15.8" fill="#000" font-weight="bold" text-anchor="start" textLength="58.1" lengthAdjust="spacingAndGlyphs" stroke="#000" stroke-width="0.35">.param</text>
<text x="633.2" y="302.3" font-size="15.8" fill="#000" font-weight="bold" text-anchor="start" textLength="63.3" lengthAdjust="spacingAndGlyphs" stroke="#000" stroke-width="0.35">t=2.9m</text>
<text x="550.9" y="393.7" font-size="15.8" fill="#000" font-weight="bold" text-anchor="start" textLength="56.7" lengthAdjust="spacingAndGlyphs" stroke="#000" stroke-width="0.35">.model</text>
<text x="613.2" y="393.7" font-size="15.8" fill="#000" font-weight="bold" text-anchor="start" textLength="26.9" lengthAdjust="spacingAndGlyphs" stroke="#000" stroke-width="0.35">SW</text>
<text x="646" y="393.7" font-size="15.8" fill="#000" font-weight="bold" text-anchor="start" textLength="99.4" lengthAdjust="spacingAndGlyphs" stroke="#000" stroke-width="0.35">SW(Ron=.1</text>
<text x="752.4" y="393.7" font-size="15.8" fill="#000" font-weight="bold" text-anchor="start" textLength="95.2" lengthAdjust="spacingAndGlyphs" stroke="#000" stroke-width="0.35">Roff=1Meg</text>
<text x="854.6" y="393.7" font-size="15.8" fill="#000" font-weight="bold" text-anchor="start" textLength="41.0" lengthAdjust="spacingAndGlyphs" stroke="#000" stroke-width="0.35">Vt=2</text>
<text x="903.2" y="393.7" font-size="15.8" fill="#000" font-weight="bold" text-anchor="start" textLength="53.1" lengthAdjust="spacingAndGlyphs" stroke="#000" stroke-width="0.35">Vh=0)</text>
<text x="770.3" y="369.6" font-size="15.8" fill="#000" font-weight="bold" text-anchor="start" textLength="71.4" lengthAdjust="spacingAndGlyphs" stroke="#000" stroke-width="0.35">PULSE(0</text>
<text x="848.7" y="369.6" font-size="15.8" fill="#000" font-weight="bold" text-anchor="start" textLength="10.0" lengthAdjust="spacingAndGlyphs" stroke="#000" stroke-width="0.35">5</text>
<text x="864.6" y="369.6" font-size="15.8" fill="#000" font-weight="bold" text-anchor="start" textLength="73.0" lengthAdjust="spacingAndGlyphs" stroke="#000" stroke-width="0.35">{10m-t}</text>
<text x="944.6" y="369.6" font-size="15.8" fill="#000" font-weight="bold" text-anchor="start" textLength="19.3" lengthAdjust="spacingAndGlyphs" stroke="#000" stroke-width="0.35">1µ</text>
<text x="971.5" y="369.6" font-size="15.8" fill="#000" font-weight="bold" text-anchor="start" textLength="19.4" lengthAdjust="spacingAndGlyphs" stroke="#000" stroke-width="0.35">1µ</text>
<text x="997.9" y="369.6" font-size="15.8" fill="#000" font-weight="bold" text-anchor="start" textLength="26.9" lengthAdjust="spacingAndGlyphs" stroke="#000" stroke-width="0.35">{t}</text>
<text x="1032.4" y="369.6" font-size="15.8" fill="#000" font-weight="bold" text-anchor="start" textLength="43.4" lengthAdjust="spacingAndGlyphs" stroke="#000" stroke-width="0.35">10m)</text>
<text x="813.5" y="308.8" font-size="15.8" fill="#000" font-weight="bold" text-anchor="start" textLength="21.2" lengthAdjust="spacingAndGlyphs" stroke="#000" stroke-width="0.35">V2</text>
<text x="850.5" y="216.4" font-size="15.8" fill="#000" font-weight="bold" text-anchor="start" textLength="20.1" lengthAdjust="spacingAndGlyphs" stroke="#000" stroke-width="0.35">C1</text>
<text x="850.5" y="253.5" font-size="15.8" fill="#000" font-weight="bold" text-anchor="start" textLength="36.9" lengthAdjust="spacingAndGlyphs" stroke="#000" stroke-width="0.35">4m7</text>
<text x="923.2" y="320.3" font-size="15.8" fill="#000" font-weight="bold" text-anchor="start" textLength="10.8" lengthAdjust="spacingAndGlyphs" stroke="#000" stroke-width="0.35">4</text>
<text x="923.6" y="341.8" font-size="15.8" fill="#000" font-weight="bold" text-anchor="start" textLength="35.7" lengthAdjust="spacingAndGlyphs" stroke="#000" stroke-width="0.35">load</text>
<text x="924.4" y="259.8" font-size="15.8" fill="#000" font-weight="bold" text-anchor="start" stroke="#000" stroke-width="0.35">I</text>
<text x="931.3" y="259.8" font-size="15.8" fill="#000" font-weight="bold" text-anchor="start" textLength="9.3" lengthAdjust="spacingAndGlyphs" stroke="#000" stroke-width="0.35">1</text>
<path d="M923.3 249.4h6.6M923.3 258.9h6.6" stroke="#000" stroke-width="1.7"/>
<text transform="translate(751.6,172.3) rotate(-90)" font-size="15.8" font-weight="bold" stroke="#000" stroke-width="0.35" textLength="20.3" lengthAdjust="spacingAndGlyphs">S1</text>
<text transform="translate(812.8,172.3) rotate(-90)" font-size="15.8" font-weight="bold" stroke="#000" stroke-width="0.35" textLength="27.5" lengthAdjust="spacingAndGlyphs">SW</text>
<defs><filter id="sh" x="-20%" y="-20%" width="140%" height="150%"><feGaussianBlur stdDeviation="6"/></filter></defs>
<rect x="1018" y="204" width="251" height="148" fill="#000" opacity="0.32" filter="url(#sh)"/>
<g shape-rendering="crispEdges">
<rect x="1020.5" y="200.5" width="246" height="143" fill="#f0f0f0" stroke="#6d6d6d"/><rect x="1021" y="342" width="245" height="1" fill="#fff"/><rect x="1265" y="231" width="1" height="112" fill="#fff"/>
<rect x="1021" y="201" width="245" height="30" fill="#fff"/>
<rect x="1125.5" y="239.5" width="137" height="19" fill="#f0f0f0" stroke="#7a7a7a"/>
<rect x="1126" y="257" width="136" height="1" fill="#fff"/><rect x="1261" y="240" width="1" height="18" fill="#fff"/>
<rect x="1125.5" y="264.5" width="137" height="19" fill="#f0f0f0" stroke="#7a7a7a"/>
<rect x="1126" y="282" width="136" height="1" fill="#fff"/><rect x="1261" y="265" width="1" height="18" fill="#fff"/>
<rect x="1125.5" y="288.5" width="137" height="19" fill="#f0f0f0" stroke="#0078d7"/>
<rect x="1126" y="306" width="136" height="1" fill="#fff"/><rect x="1261" y="289" width="1" height="18" fill="#fff"/>
<rect x="1125.5" y="312.5" width="137" height="19" fill="#f0f0f0" stroke="#7a7a7a"/>
<rect x="1126" y="330" width="136" height="1" fill="#fff"/><rect x="1261" y="313" width="1" height="18" fill="#fff"/>
<rect x="1172" y="291" width="1" height="13" fill="#000"/>
</g>
<path d="M1029.5 207.5 V222.5 L1041.5 214" fill="none" stroke="#000" stroke-width="1.1"/>
<path d="M1032 207 H1035 L1033.6 212.5 H1036.8 L1036.4 214.5 H1030.5 Z" fill="#8b0a14"/>
<path d="M1036.5 207 H1045 L1044.4 209.2 H1041.8 L1040.3 214.5 H1037.8 L1039.3 209.2 H1036 Z" fill="#8b0a14"/>
<text x="1050.4" y="219.6" font-size="12" fill="#000" font-weight="normal" text-anchor="start" textLength="161.2" lengthAdjust="spacingAndGlyphs" >Waveform: V(N001,N002)*I(R1)</text>
<path d="M1246 210.5 L1256 220.5 M1256 210.5 L1246 220.5" stroke="#000" stroke-width="1.1"/>
<text x="1053.1" y="253" font-size="12" fill="#000" font-weight="normal" text-anchor="start" textLength="62.6" lengthAdjust="spacingAndGlyphs" >Interval Start:</text>
<text x="1055.8" y="277.5" font-size="12" fill="#000" font-weight="normal" text-anchor="start" textLength="59.9" lengthAdjust="spacingAndGlyphs" >Interval End:</text>
<text x="1073.2" y="302" font-size="12" fill="#000" font-weight="normal" text-anchor="start" textLength="42.5" lengthAdjust="spacingAndGlyphs" >Average:</text>
<text x="1078.2" y="326.4" font-size="12" fill="#000" font-weight="normal" text-anchor="start" textLength="37.5" lengthAdjust="spacingAndGlyphs" >Integral:</text>
<text x="1187.8" y="252.6" font-size="12" fill="#000" font-weight="normal" text-anchor="start" textLength="10.8" lengthAdjust="spacingAndGlyphs" >0s</text>
<text x="1178.2" y="277.6" font-size="12" fill="#000" font-weight="normal" text-anchor="start" textLength="30.1" lengthAdjust="spacingAndGlyphs" >700ms</text>
<text x="1173.5" y="302" font-size="12" fill="#000" font-weight="normal" text-anchor="start" textLength="41.7" lengthAdjust="spacingAndGlyphs" >421.61W</text>
<text x="1175" y="325.8" font-size="12" fill="#000" font-weight="normal" text-anchor="start" textLength="37.3" lengthAdjust="spacingAndGlyphs" >295.13J</text>
<g shape-rendering="crispEdges">
<rect x="64.5" y="477.5" width="1270" height="234" fill="none" stroke="#c0c0c0"/>
<rect x="57" y="477" width="8" height="1" fill="#c0c0c0"/>
<rect x="57" y="498" width="8" height="1" fill="#c0c0c0"/>
<rect x="57" y="520" width="8" height="1" fill="#c0c0c0"/>
<rect x="57" y="541" width="8" height="1" fill="#c0c0c0"/>
<rect x="57" y="562" width="8" height="1" fill="#c0c0c0"/>
<rect x="57" y="583" width="8" height="1" fill="#c0c0c0"/>
<rect x="57" y="605" width="8" height="1" fill="#c0c0c0"/>
<rect x="57" y="626" width="8" height="1" fill="#c0c0c0"/>
<rect x="57" y="647" width="8" height="1" fill="#c0c0c0"/>
<rect x="57" y="668" width="8" height="1" fill="#c0c0c0"/>
<rect x="57" y="690" width="8" height="1" fill="#c0c0c0"/>
<rect x="57" y="711" width="8" height="1" fill="#c0c0c0"/>
<rect x="64" y="711" width="1" height="8" fill="#c0c0c0"/>
<rect x="191" y="711" width="1" height="8" fill="#c0c0c0"/>
<rect x="318" y="711" width="1" height="8" fill="#c0c0c0"/>
<rect x="445" y="711" width="1" height="8" fill="#c0c0c0"/>
<rect x="572" y="711" width="1" height="8" fill="#c0c0c0"/>
<rect x="699" y="711" width="1" height="8" fill="#c0c0c0"/>
<rect x="826" y="711" width="1" height="8" fill="#c0c0c0"/>
<rect x="953" y="711" width="1" height="8" fill="#c0c0c0"/>
<rect x="1080" y="711" width="1" height="8" fill="#c0c0c0"/>
<rect x="1207" y="711" width="1" height="8" fill="#c0c0c0"/>
<rect x="1334" y="711" width="1" height="8" fill="#c0c0c0"/>
<path d="M64 690h1v1h-1zM65 690h1v1h-1zM66 690h1v1h-1zM67 690h1v1h-1zM68 690h1v1h-1zM69 690h1v1h-1zM70 690h1v1h-1zM71 690h1v1h-1zM72 690h1v1h-1zM73 690h1v1h-1zM74 690h1v1h-1zM75 690h1v1h-1zM76 685h1v6h-1zM77 480h1v206h-1zM78 535h1v69h-1zM79 603h1v48h-1zM80 650h1v28h-1zM81 677h1v13h-1zM82 689h1v2h-1zM83 690h1v1h-1zM84 690h1v1h-1zM85 690h1v1h-1zM86 690h1v1h-1zM87 690h1v1h-1zM88 690h1v1h-1zM89 690h1v1h-1zM90 690h1v1h-1zM91 690h1v1h-1zM92 690h1v1h-1zM93 690h1v1h-1zM94 690h1v1h-1zM95 482h1v209h-1zM96 524h1v73h-1zM97 596h1v50h-1zM98 645h1v31h-1zM99 675h1v14h-1zM100 688h1v3h-1zM101 690h1v1h-1zM102 690h1v1h-1zM103 690h1v1h-1zM104 690h1v1h-1zM105 690h1v1h-1zM106 690h1v1h-1zM107 690h1v1h-1zM108 690h1v1h-1zM109 690h1v1h-1zM110 690h1v1h-1zM111 690h1v1h-1zM112 690h1v1h-1zM113 483h1v208h-1zM114 513h1v76h-1zM115 588h1v53h-1zM116 640h1v33h-1zM117 672h1v16h-1zM118 687h1v4h-1zM119 690h1v1h-1zM120 690h1v1h-1zM121 690h1v1h-1zM122 690h1v1h-1zM123 690h1v1h-1zM124 690h1v1h-1zM125 690h1v1h-1zM126 690h1v1h-1zM127 690h1v1h-1zM128 690h1v1h-1zM129 690h1v1h-1zM130 690h1v1h-1zM131 485h1v206h-1zM132 502h1v78h-1zM133 579h1v56h-1zM134 634h1v35h-1zM135 668h1v19h-1zM136 686h1v5h-1zM137 690h1v1h-1zM138 690h1v1h-1zM139 690h1v1h-1zM140 690h1v1h-1zM141 690h1v1h-1zM142 690h1v1h-1zM143 690h1v1h-1zM144 690h1v1h-1zM145 690h1v1h-1zM146 690h1v1h-1zM147 690h1v1h-1zM148 690h1v1h-1zM149 486h1v205h-1zM150 490h1v81h-1zM151 570h1v59h-1zM152 628h1v38h-1zM153 665h1v20h-1zM154 684h1v7h-1zM155 690h1v1h-1zM156 690h1v1h-1zM157 690h1v1h-1zM158 690h1v1h-1zM159 690h1v1h-1zM160 690h1v1h-1zM161 690h1v1h-1zM162 690h1v1h-1zM163 690h1v1h-1zM164 690h1v1h-1zM165 690h1v1h-1zM166 690h1v1h-1zM167 537h1v154h-1zM168 487h1v75h-1zM169 561h1v61h-1zM170 621h1v41h-1zM171 661h1v22h-1zM172 682h1v9h-1zM173 690h1v1h-1zM174 690h1v1h-1zM175 690h1v1h-1zM176 690h1v1h-1zM177 690h1v1h-1zM178 690h1v1h-1zM179 690h1v1h-1zM180 690h1v1h-1zM181 690h1v1h-1zM182 690h1v1h-1zM183 690h1v1h-1zM184 690h1v1h-1zM185 611h1v80h-1zM186 488h1v124h-1zM187 551h1v64h-1zM188 614h1v43h-1zM189 656h1v25h-1zM190 680h1v10h-1zM191 689h1v2h-1zM192 690h1v1h-1zM193 690h1v1h-1zM194 690h1v1h-1zM195 690h1v1h-1zM196 690h1v1h-1zM197 690h1v1h-1zM198 690h1v1h-1zM199 690h1v1h-1zM200 690h1v1h-1zM201 690h1v1h-1zM202 690h1v1h-1zM203 686h1v5h-1zM204 489h1v198h-1zM205 541h1v67h-1zM206 607h1v46h-1zM207 652h1v27h-1zM208 678h1v12h-1zM209 689h1v2h-1zM210 690h1v1h-1zM211 690h1v1h-1zM212 690h1v1h-1zM213 690h1v1h-1zM214 690h1v1h-1zM215 690h1v1h-1zM216 690h1v1h-1zM217 690h1v1h-1zM218 690h1v1h-1zM219 690h1v1h-1zM220 690h1v1h-1zM221 690h1v1h-1zM222 489h1v202h-1zM223 530h1v70h-1zM224 599h1v49h-1zM225 647h1v29h-1zM226 675h1v14h-1zM227 688h1v3h-1zM228 690h1v1h-1zM229 690h1v1h-1zM230 690h1v1h-1zM231 690h1v1h-1zM232 690h1v1h-1zM233 690h1v1h-1zM234 690h1v1h-1zM235 690h1v1h-1zM236 690h1v1h-1zM237 690h1v1h-1zM238 690h1v1h-1zM239 690h1v1h-1zM240 490h1v201h-1zM241 519h1v73h-1zM242 591h1v51h-1zM243 641h1v32h-1zM244 672h1v16h-1zM245 687h1v4h-1zM246 690h1v1h-1zM247 690h1v1h-1zM248 690h1v1h-1zM249 690h1v1h-1zM250 690h1v1h-1zM251 690h1v1h-1zM252 690h1v1h-1zM253 690h1v1h-1zM254 690h1v1h-1zM255 690h1v1h-1zM256 690h1v1h-1zM257 690h1v1h-1zM258 491h1v200h-1zM259 508h1v75h-1zM260 582h1v54h-1zM261 635h1v35h-1zM262 669h1v18h-1zM263 686h1v5h-1zM264 690h1v1h-1zM265 690h1v1h-1zM266 690h1v1h-1zM267 690h1v1h-1zM268 690h1v1h-1zM269 690h1v1h-1zM270 690h1v1h-1zM271 690h1v1h-1zM272 690h1v1h-1zM273 690h1v1h-1zM274 690h1v1h-1zM275 690h1v1h-1zM276 491h1v200h-1zM277 496h1v78h-1zM278 573h1v57h-1zM279 629h1v37h-1zM280 665h1v20h-1zM281 684h1v7h-1zM282 690h1v1h-1zM283 690h1v1h-1zM284 690h1v1h-1zM285 690h1v1h-1zM286 690h1v1h-1zM287 690h1v1h-1zM288 690h1v1h-1zM289 690h1v1h-1zM290 690h1v1h-1zM291 690h1v1h-1zM292 690h1v1h-1zM293 690h1v1h-1zM294 540h1v151h-1zM295 492h1v73h-1zM296 564h1v60h-1zM297 623h1v39h-1zM298 661h1v22h-1zM299 682h1v9h-1zM300 690h1v1h-1zM301 690h1v1h-1zM302 690h1v1h-1zM303 690h1v1h-1zM304 690h1v1h-1zM305 690h1v1h-1zM306 690h1v1h-1zM307 690h1v1h-1zM308 690h1v1h-1zM309 690h1v1h-1zM310 690h1v1h-1zM311 690h1v1h-1zM312 613h1v78h-1zM313 492h1v122h-1zM314 554h1v63h-1zM315 616h1v42h-1zM316 657h1v24h-1zM317 680h1v10h-1zM318 689h1v2h-1zM319 690h1v1h-1zM320 690h1v1h-1zM321 690h1v1h-1zM322 690h1v1h-1zM323 690h1v1h-1zM324 690h1v1h-1zM325 690h1v1h-1zM326 690h1v1h-1zM327 690h1v1h-1zM328 690h1v1h-1zM329 690h1v1h-1zM330 686h1v5h-1zM331 493h1v194h-1zM332 544h1v66h-1zM333 609h1v44h-1zM334 652h1v27h-1zM335 678h1v12h-1zM336 689h1v2h-1zM337 690h1v1h-1zM338 690h1v1h-1zM339 690h1v1h-1zM340 690h1v1h-1zM341 690h1v1h-1zM342 690h1v1h-1zM343 690h1v1h-1zM344 690h1v1h-1zM345 690h1v1h-1zM346 690h1v1h-1zM347 690h1v1h-1zM348 690h1v1h-1zM349 493h1v198h-1zM350 533h1v69h-1zM351 601h1v47h-1zM352 647h1v29h-1zM353 675h1v14h-1zM354 688h1v3h-1zM355 690h1v1h-1zM356 690h1v1h-1zM357 690h1v1h-1zM358 690h1v1h-1zM359 690h1v1h-1zM360 690h1v1h-1zM361 690h1v1h-1zM362 690h1v1h-1zM363 690h1v1h-1zM364 690h1v1h-1zM365 690h1v1h-1zM366 690h1v1h-1zM367 493h1v198h-1zM368 522h1v72h-1zM369 593h1v50h-1zM370 642h1v31h-1zM371 672h1v16h-1zM372 687h1v4h-1zM373 690h1v1h-1zM374 690h1v1h-1zM375 690h1v1h-1zM376 690h1v1h-1zM377 690h1v1h-1zM378 690h1v1h-1zM379 690h1v1h-1zM380 690h1v1h-1zM381 690h1v1h-1zM382 690h1v1h-1zM383 690h1v1h-1zM384 690h1v1h-1zM385 494h1v197h-1zM386 510h1v75h-1zM387 584h1v53h-1zM388 636h1v34h-1zM389 669h1v18h-1zM390 686h1v5h-1zM391 690h1v1h-1zM392 690h1v1h-1zM393 690h1v1h-1zM394 690h1v1h-1zM395 690h1v1h-1zM396 690h1v1h-1zM397 690h1v1h-1zM398 690h1v1h-1zM399 690h1v1h-1zM400 690h1v1h-1zM401 690h1v1h-1zM402 690h1v1h-1zM403 494h1v197h-1zM404 498h1v78h-1zM405 575h1v56h-1zM406 630h1v37h-1zM407 666h1v19h-1zM408 684h1v7h-1zM409 690h1v1h-1zM410 690h1v1h-1zM411 690h1v1h-1zM412 690h1v1h-1zM413 690h1v1h-1zM414 690h1v1h-1zM415 690h1v1h-1zM416 690h1v1h-1zM417 690h1v1h-1zM418 690h1v1h-1zM419 690h1v1h-1zM420 690h1v1h-1zM421 542h1v149h-1zM422 494h1v73h-1zM423 566h1v59h-1zM424 624h1v39h-1zM425 662h1v22h-1zM426 683h1v8h-1zM427 690h1v1h-1zM428 690h1v1h-1zM429 690h1v1h-1zM430 690h1v1h-1zM431 690h1v1h-1zM432 690h1v1h-1zM433 690h1v1h-1zM434 690h1v1h-1zM435 690h1v1h-1zM436 690h1v1h-1zM437 690h1v1h-1zM438 690h1v1h-1zM439 614h1v77h-1zM440 494h1v121h-1zM441 556h1v62h-1zM442 617h1v41h-1zM443 657h1v24h-1zM444 680h1v10h-1zM445 689h1v2h-1zM446 690h1v1h-1zM447 690h1v1h-1zM448 690h1v1h-1zM449 690h1v1h-1zM450 690h1v1h-1zM451 690h1v1h-1zM452 690h1v1h-1zM453 690h1v1h-1zM454 690h1v1h-1zM455 690h1v1h-1zM456 690h1v1h-1zM457 686h1v5h-1zM458 494h1v193h-1zM459 545h1v65h-1zM460 609h1v45h-1zM461 653h1v26h-1zM462 678h1v12h-1zM463 689h1v2h-1zM464 690h1v1h-1zM465 690h1v1h-1zM466 690h1v1h-1zM467 690h1v1h-1zM468 690h1v1h-1zM469 690h1v1h-1zM470 690h1v1h-1zM471 690h1v1h-1zM472 690h1v1h-1zM473 690h1v1h-1zM474 690h1v1h-1zM475 690h1v1h-1zM476 495h1v196h-1zM477 534h1v69h-1zM478 602h1v47h-1zM479 648h1v29h-1zM480 676h1v13h-1zM481 688h1v3h-1zM482 690h1v1h-1zM483 690h1v1h-1zM484 690h1v1h-1zM485 690h1v1h-1zM486 690h1v1h-1zM487 690h1v1h-1zM488 690h1v1h-1zM489 690h1v1h-1zM490 690h1v1h-1zM491 690h1v1h-1zM492 690h1v1h-1zM493 690h1v1h-1zM494 495h1v196h-1zM495 523h1v71h-1zM496 593h1v50h-1zM497 642h1v32h-1zM498 673h1v15h-1zM499 687h1v4h-1zM500 690h1v1h-1zM501 690h1v1h-1zM502 690h1v1h-1zM503 690h1v1h-1zM504 690h1v1h-1zM505 690h1v1h-1zM506 690h1v1h-1zM507 690h1v1h-1zM508 690h1v1h-1zM509 690h1v1h-1zM510 690h1v1h-1zM511 690h1v1h-1zM512 495h1v196h-1zM513 511h1v75h-1zM514 585h1v53h-1zM515 637h1v33h-1zM516 669h1v18h-1zM517 686h1v5h-1zM518 690h1v1h-1zM519 690h1v1h-1zM520 690h1v1h-1zM521 690h1v1h-1zM522 690h1v1h-1zM523 690h1v1h-1zM524 690h1v1h-1zM525 690h1v1h-1zM526 690h1v1h-1zM527 690h1v1h-1zM528 690h1v1h-1zM529 690h1v1h-1zM530 495h1v196h-1zM531 499h1v78h-1zM532 576h1v55h-1zM533 630h1v37h-1zM534 666h1v19h-1zM535 684h1v7h-1zM536 690h1v1h-1zM537 690h1v1h-1zM538 690h1v1h-1zM539 690h1v1h-1zM540 690h1v1h-1zM541 690h1v1h-1zM542 690h1v1h-1zM543 690h1v1h-1zM544 690h1v1h-1zM545 690h1v1h-1zM546 690h1v1h-1zM547 690h1v1h-1zM548 543h1v148h-1zM549 495h1v72h-1zM550 566h1v59h-1zM551 624h1v39h-1zM552 662h1v22h-1zM553 683h1v8h-1zM554 690h1v1h-1zM555 690h1v1h-1zM556 690h1v1h-1zM557 690h1v1h-1zM558 690h1v1h-1zM559 690h1v1h-1zM560 690h1v1h-1zM561 690h1v1h-1zM562 690h1v1h-1zM563 690h1v1h-1zM564 690h1v1h-1zM565 690h1v1h-1zM566 614h1v77h-1zM567 495h1v120h-1zM568 556h1v62h-1zM569 617h1v42h-1zM570 658h1v24h-1zM571 681h1v9h-1zM572 689h1v2h-1zM573 690h1v1h-1zM574 690h1v1h-1zM575 690h1v1h-1zM576 690h1v1h-1zM577 690h1v1h-1zM578 690h1v1h-1zM579 690h1v1h-1zM580 690h1v1h-1zM581 690h1v1h-1zM582 690h1v1h-1zM583 690h1v1h-1zM584 686h1v5h-1zM585 495h1v192h-1zM586 546h1v65h-1zM587 610h1v44h-1zM588 653h1v26h-1zM589 678h1v12h-1zM590 689h1v2h-1zM591 690h1v1h-1zM592 690h1v1h-1zM593 690h1v1h-1zM594 690h1v1h-1zM595 690h1v1h-1zM596 690h1v1h-1zM597 690h1v1h-1zM598 690h1v1h-1zM599 690h1v1h-1zM600 690h1v1h-1zM601 690h1v1h-1zM602 690h1v1h-1zM603 495h1v196h-1zM604 535h1v68h-1zM605 602h1v47h-1zM606 648h1v29h-1zM607 676h1v13h-1zM608 688h1v3h-1zM609 690h1v1h-1zM610 690h1v1h-1zM611 690h1v1h-1zM612 690h1v1h-1zM613 690h1v1h-1zM614 690h1v1h-1zM615 690h1v1h-1zM616 690h1v1h-1zM617 690h1v1h-1zM618 690h1v1h-1zM619 690h1v1h-1zM620 690h1v1h-1zM621 495h1v196h-1zM622 524h1v71h-1zM623 594h1v50h-1zM624 643h1v31h-1zM625 673h1v15h-1zM626 687h1v4h-1zM627 690h1v1h-1zM628 690h1v1h-1zM629 690h1v1h-1zM630 690h1v1h-1zM631 690h1v1h-1zM632 690h1v1h-1zM633 690h1v1h-1zM634 690h1v1h-1zM635 690h1v1h-1zM636 690h1v1h-1zM637 690h1v1h-1zM638 690h1v1h-1zM639 495h1v196h-1zM640 512h1v74h-1zM641 585h1v53h-1zM642 637h1v33h-1zM643 669h1v18h-1zM644 686h1v5h-1zM645 690h1v1h-1zM646 690h1v1h-1zM647 690h1v1h-1zM648 690h1v1h-1zM649 690h1v1h-1zM650 690h1v1h-1zM651 690h1v1h-1zM652 690h1v1h-1zM653 690h1v1h-1zM654 690h1v1h-1zM655 690h1v1h-1zM656 690h1v1h-1zM657 496h1v195h-1zM658 500h1v77h-1zM659 576h1v56h-1zM660 631h1v36h-1zM661 666h1v19h-1zM662 684h1v7h-1zM663 690h1v1h-1zM664 690h1v1h-1zM665 690h1v1h-1zM666 690h1v1h-1zM667 690h1v1h-1zM668 690h1v1h-1zM669 690h1v1h-1zM670 690h1v1h-1zM671 690h1v1h-1zM672 690h1v1h-1zM673 690h1v1h-1zM674 690h1v1h-1zM675 543h1v148h-1zM676 496h1v71h-1zM677 566h1v59h-1zM678 624h1v39h-1zM679 662h1v22h-1zM680 683h1v8h-1zM681 690h1v1h-1zM682 690h1v1h-1zM683 690h1v1h-1zM684 690h1v1h-1zM685 690h1v1h-1zM686 690h1v1h-1zM687 690h1v1h-1zM688 690h1v1h-1zM689 690h1v1h-1zM690 690h1v1h-1zM691 690h1v1h-1zM692 690h1v1h-1zM693 615h1v76h-1zM694 496h1v120h-1zM695 557h1v61h-1zM696 617h1v42h-1zM697 658h1v24h-1zM698 681h1v9h-1zM699 689h1v2h-1zM700 690h1v1h-1zM701 690h1v1h-1zM702 690h1v1h-1zM703 690h1v1h-1zM704 690h1v1h-1zM705 690h1v1h-1zM706 690h1v1h-1zM707 690h1v1h-1zM708 690h1v1h-1zM709 690h1v1h-1zM710 690h1v1h-1zM711 686h1v5h-1zM712 496h1v191h-1zM713 546h1v65h-1zM714 610h1v44h-1zM715 653h1v26h-1zM716 678h1v12h-1zM717 689h1v2h-1zM718 690h1v1h-1zM719 690h1v1h-1zM720 690h1v1h-1zM721 690h1v1h-1zM722 690h1v1h-1zM723 690h1v1h-1zM724 690h1v1h-1zM725 690h1v1h-1zM726 690h1v1h-1zM727 690h1v1h-1zM728 690h1v1h-1zM729 690h1v1h-1zM730 496h1v195h-1zM731 535h1v68h-1zM732 602h1v47h-1zM733 648h1v29h-1zM734 676h1v13h-1zM735 688h1v3h-1zM736 690h1v1h-1zM737 690h1v1h-1zM738 690h1v1h-1zM739 690h1v1h-1zM740 690h1v1h-1zM741 690h1v1h-1zM742 690h1v1h-1zM743 690h1v1h-1zM744 690h1v1h-1zM745 690h1v1h-1zM746 690h1v1h-1zM747 690h1v1h-1zM748 496h1v195h-1zM749 524h1v71h-1zM750 594h1v50h-1zM751 643h1v31h-1zM752 673h1v15h-1zM753 687h1v4h-1zM754 690h1v1h-1zM755 690h1v1h-1zM756 690h1v1h-1zM757 690h1v1h-1zM758 690h1v1h-1zM759 690h1v1h-1zM760 690h1v1h-1zM761 690h1v1h-1zM762 690h1v1h-1zM763 690h1v1h-1zM764 690h1v1h-1zM765 690h1v1h-1zM766 496h1v195h-1zM767 512h1v74h-1zM768 585h1v53h-1zM769 637h1v33h-1zM770 669h1v18h-1zM771 686h1v5h-1zM772 690h1v1h-1zM773 690h1v1h-1zM774 690h1v1h-1zM775 690h1v1h-1zM776 690h1v1h-1zM777 690h1v1h-1zM778 690h1v1h-1zM779 690h1v1h-1zM780 690h1v1h-1zM781 690h1v1h-1zM782 690h1v1h-1zM783 690h1v1h-1zM784 496h1v195h-1zM785 500h1v77h-1zM786 576h1v56h-1zM787 631h1v36h-1zM788 666h1v19h-1zM789 684h1v7h-1zM790 690h1v1h-1zM791 690h1v1h-1zM792 690h1v1h-1zM793 690h1v1h-1zM794 690h1v1h-1zM795 690h1v1h-1zM796 690h1v1h-1zM797 690h1v1h-1zM798 690h1v1h-1zM799 690h1v1h-1zM800 690h1v1h-1zM801 690h1v1h-1zM802 543h1v148h-1zM803 496h1v72h-1zM804 567h1v58h-1zM805 624h1v39h-1zM806 662h1v22h-1zM807 683h1v8h-1zM808 690h1v1h-1zM809 690h1v1h-1zM810 690h1v1h-1zM811 690h1v1h-1zM812 690h1v1h-1zM813 690h1v1h-1zM814 690h1v1h-1zM815 690h1v1h-1zM816 690h1v1h-1zM817 690h1v1h-1zM818 690h1v1h-1zM819 690h1v1h-1zM820 615h1v76h-1zM821 496h1v120h-1zM822 557h1v61h-1zM823 617h1v42h-1zM824 658h1v24h-1zM825 681h1v9h-1zM826 689h1v2h-1zM827 690h1v1h-1zM828 690h1v1h-1zM829 690h1v1h-1zM830 690h1v1h-1zM831 690h1v1h-1zM832 690h1v1h-1zM833 690h1v1h-1zM834 690h1v1h-1zM835 690h1v1h-1zM836 690h1v1h-1zM837 690h1v1h-1zM838 686h1v5h-1zM839 496h1v191h-1zM840 546h1v65h-1zM841 610h1v44h-1zM842 653h1v26h-1zM843 678h1v12h-1zM844 689h1v2h-1zM845 690h1v1h-1zM846 690h1v1h-1zM847 690h1v1h-1zM848 690h1v1h-1zM849 690h1v1h-1zM850 690h1v1h-1zM851 690h1v1h-1zM852 690h1v1h-1zM853 690h1v1h-1zM854 690h1v1h-1zM855 690h1v1h-1zM856 690h1v1h-1zM857 496h1v195h-1zM858 535h1v68h-1zM859 602h1v47h-1zM860 648h1v29h-1zM861 676h1v13h-1zM862 688h1v3h-1zM863 690h1v1h-1zM864 690h1v1h-1zM865 690h1v1h-1zM866 690h1v1h-1zM867 690h1v1h-1zM868 690h1v1h-1zM869 690h1v1h-1zM870 690h1v1h-1zM871 690h1v1h-1zM872 690h1v1h-1zM873 690h1v1h-1zM874 690h1v1h-1zM875 496h1v195h-1zM876 524h1v71h-1zM877 594h1v50h-1zM878 643h1v31h-1zM879 673h1v15h-1zM880 687h1v4h-1zM881 690h1v1h-1zM882 690h1v1h-1zM883 690h1v1h-1zM884 690h1v1h-1zM885 690h1v1h-1zM886 690h1v1h-1zM887 690h1v1h-1zM888 690h1v1h-1zM889 690h1v1h-1zM890 690h1v1h-1zM891 690h1v1h-1zM892 690h1v1h-1zM893 496h1v195h-1zM894 512h1v74h-1zM895 585h1v53h-1zM896 637h1v33h-1zM897 669h1v18h-1zM898 686h1v5h-1zM899 690h1v1h-1zM900 690h1v1h-1zM901 690h1v1h-1zM902 690h1v1h-1zM903 690h1v1h-1zM904 690h1v1h-1zM905 690h1v1h-1zM906 690h1v1h-1zM907 690h1v1h-1zM908 690h1v1h-1zM909 690h1v1h-1zM910 690h1v1h-1zM911 496h1v195h-1zM912 500h1v77h-1zM913 576h1v56h-1zM914 631h1v36h-1zM915 666h1v19h-1zM916 684h1v7h-1zM917 690h1v1h-1zM918 690h1v1h-1zM919 690h1v1h-1zM920 690h1v1h-1zM921 690h1v1h-1zM922 690h1v1h-1zM923 690h1v1h-1zM924 690h1v1h-1zM925 690h1v1h-1zM926 690h1v1h-1zM927 690h1v1h-1zM928 690h1v1h-1zM929 544h1v147h-1zM930 496h1v72h-1zM931 567h1v58h-1zM932 624h1v39h-1zM933 662h1v22h-1zM934 683h1v8h-1zM935 690h1v1h-1zM936 690h1v1h-1zM937 690h1v1h-1zM938 690h1v1h-1zM939 690h1v1h-1zM940 690h1v1h-1zM941 690h1v1h-1zM942 690h1v1h-1zM943 690h1v1h-1zM944 690h1v1h-1zM945 690h1v1h-1zM946 690h1v1h-1zM947 615h1v76h-1zM948 496h1v120h-1zM949 557h1v61h-1zM950 617h1v42h-1zM951 658h1v24h-1zM952 681h1v9h-1zM953 689h1v2h-1zM954 690h1v1h-1zM955 690h1v1h-1zM956 690h1v1h-1zM957 690h1v1h-1zM958 690h1v1h-1zM959 690h1v1h-1zM960 690h1v1h-1zM961 690h1v1h-1zM962 690h1v1h-1zM963 690h1v1h-1zM964 690h1v1h-1zM965 686h1v5h-1zM966 496h1v191h-1zM967 546h1v65h-1zM968 610h1v44h-1zM969 653h1v26h-1zM970 678h1v12h-1zM971 689h1v2h-1zM972 690h1v1h-1zM973 690h1v1h-1zM974 690h1v1h-1zM975 690h1v1h-1zM976 690h1v1h-1zM977 690h1v1h-1zM978 690h1v1h-1zM979 690h1v1h-1zM980 690h1v1h-1zM981 690h1v1h-1zM982 690h1v1h-1zM983 690h1v1h-1zM984 496h1v195h-1zM985 535h1v68h-1zM986 602h1v47h-1zM987 648h1v29h-1zM988 676h1v13h-1zM989 688h1v3h-1zM990 690h1v1h-1zM991 690h1v1h-1zM992 690h1v1h-1zM993 690h1v1h-1zM994 690h1v1h-1zM995 690h1v1h-1zM996 690h1v1h-1zM997 690h1v1h-1zM998 690h1v1h-1zM999 690h1v1h-1zM1000 690h1v1h-1zM1001 690h1v1h-1zM1002 496h1v195h-1zM1003 524h1v71h-1zM1004 594h1v50h-1zM1005 643h1v31h-1zM1006 673h1v15h-1zM1007 687h1v4h-1zM1008 690h1v1h-1zM1009 690h1v1h-1zM1010 690h1v1h-1zM1011 690h1v1h-1zM1012 690h1v1h-1zM1013 690h1v1h-1zM1014 690h1v1h-1zM1015 690h1v1h-1zM1016 690h1v1h-1zM1017 690h1v1h-1zM1018 690h1v1h-1zM1019 690h1v1h-1zM1020 496h1v195h-1zM1021 512h1v74h-1zM1022 585h1v53h-1zM1023 637h1v33h-1zM1024 669h1v18h-1zM1025 686h1v5h-1zM1026 690h1v1h-1zM1027 690h1v1h-1zM1028 690h1v1h-1zM1029 690h1v1h-1zM1030 690h1v1h-1zM1031 690h1v1h-1zM1032 690h1v1h-1zM1033 690h1v1h-1zM1034 690h1v1h-1zM1035 690h1v1h-1zM1036 690h1v1h-1zM1037 690h1v1h-1zM1038 496h1v195h-1zM1039 500h1v77h-1zM1040 576h1v56h-1zM1041 631h1v36h-1zM1042 666h1v19h-1zM1043 684h1v7h-1zM1044 690h1v1h-1zM1045 690h1v1h-1zM1046 690h1v1h-1zM1047 690h1v1h-1zM1048 690h1v1h-1zM1049 690h1v1h-1zM1050 690h1v1h-1zM1051 690h1v1h-1zM1052 690h1v1h-1zM1053 690h1v1h-1zM1054 690h1v1h-1zM1055 690h1v1h-1zM1056 544h1v147h-1zM1057 496h1v72h-1zM1058 567h1v58h-1zM1059 624h1v39h-1zM1060 662h1v22h-1zM1061 683h1v8h-1zM1062 690h1v1h-1zM1063 690h1v1h-1zM1064 690h1v1h-1zM1065 690h1v1h-1zM1066 690h1v1h-1zM1067 690h1v1h-1zM1068 690h1v1h-1zM1069 690h1v1h-1zM1070 690h1v1h-1zM1071 690h1v1h-1zM1072 690h1v1h-1zM1073 690h1v1h-1zM1074 615h1v76h-1zM1075 496h1v120h-1zM1076 557h1v61h-1zM1077 617h1v42h-1zM1078 658h1v24h-1zM1079 681h1v9h-1zM1080 689h1v2h-1zM1081 690h1v1h-1zM1082 690h1v1h-1zM1083 690h1v1h-1zM1084 690h1v1h-1zM1085 690h1v1h-1zM1086 690h1v1h-1zM1087 690h1v1h-1zM1088 690h1v1h-1zM1089 690h1v1h-1zM1090 690h1v1h-1zM1091 690h1v1h-1zM1092 686h1v5h-1zM1093 496h1v191h-1zM1094 546h1v65h-1zM1095 610h1v44h-1zM1096 653h1v26h-1zM1097 678h1v12h-1zM1098 689h1v2h-1zM1099 690h1v1h-1zM1100 690h1v1h-1zM1101 690h1v1h-1zM1102 690h1v1h-1zM1103 690h1v1h-1zM1104 690h1v1h-1zM1105 690h1v1h-1zM1106 690h1v1h-1zM1107 690h1v1h-1zM1108 690h1v1h-1zM1109 690h1v1h-1zM1110 690h1v1h-1zM1111 496h1v195h-1zM1112 536h1v67h-1zM1113 602h1v47h-1zM1114 648h1v29h-1zM1115 676h1v13h-1zM1116 688h1v3h-1zM1117 690h1v1h-1zM1118 690h1v1h-1zM1119 690h1v1h-1zM1120 690h1v1h-1zM1121 690h1v1h-1zM1122 690h1v1h-1zM1123 690h1v1h-1zM1124 690h1v1h-1zM1125 690h1v1h-1zM1126 690h1v1h-1zM1127 690h1v1h-1zM1128 690h1v1h-1zM1129 496h1v195h-1zM1130 524h1v71h-1zM1131 594h1v50h-1zM1132 643h1v31h-1zM1133 673h1v15h-1zM1134 687h1v4h-1zM1135 690h1v1h-1zM1136 690h1v1h-1zM1137 690h1v1h-1zM1138 690h1v1h-1zM1139 690h1v1h-1zM1140 690h1v1h-1zM1141 690h1v1h-1zM1142 690h1v1h-1zM1143 690h1v1h-1zM1144 690h1v1h-1zM1145 690h1v1h-1zM1146 690h1v1h-1zM1147 496h1v195h-1zM1148 512h1v74h-1zM1149 585h1v53h-1zM1150 637h1v33h-1zM1151 669h1v18h-1zM1152 686h1v5h-1zM1153 690h1v1h-1zM1154 690h1v1h-1zM1155 690h1v1h-1zM1156 690h1v1h-1zM1157 690h1v1h-1zM1158 690h1v1h-1zM1159 690h1v1h-1zM1160 690h1v1h-1zM1161 690h1v1h-1zM1162 690h1v1h-1zM1163 690h1v1h-1zM1164 690h1v1h-1zM1165 496h1v195h-1zM1166 500h1v77h-1zM1167 576h1v56h-1zM1168 631h1v36h-1zM1169 666h1v19h-1zM1170 684h1v7h-1zM1171 690h1v1h-1zM1172 690h1v1h-1zM1173 690h1v1h-1zM1174 690h1v1h-1zM1175 690h1v1h-1zM1176 690h1v1h-1zM1177 690h1v1h-1zM1178 690h1v1h-1zM1179 690h1v1h-1zM1180 690h1v1h-1zM1181 690h1v1h-1zM1182 690h1v1h-1zM1183 544h1v147h-1zM1184 496h1v72h-1zM1185 567h1v58h-1zM1186 624h1v39h-1zM1187 662h1v22h-1zM1188 683h1v8h-1zM1189 690h1v1h-1zM1190 690h1v1h-1zM1191 690h1v1h-1zM1192 690h1v1h-1zM1193 690h1v1h-1zM1194 690h1v1h-1zM1195 690h1v1h-1zM1196 690h1v1h-1zM1197 690h1v1h-1zM1198 690h1v1h-1zM1199 690h1v1h-1zM1200 690h1v1h-1zM1201 615h1v76h-1zM1202 496h1v120h-1zM1203 557h1v61h-1zM1204 617h1v42h-1zM1205 658h1v24h-1zM1206 681h1v9h-1zM1207 689h1v2h-1zM1208 690h1v1h-1zM1209 690h1v1h-1zM1210 690h1v1h-1zM1211 690h1v1h-1zM1212 690h1v1h-1zM1213 690h1v1h-1zM1214 690h1v1h-1zM1215 690h1v1h-1zM1216 690h1v1h-1zM1217 690h1v1h-1zM1218 690h1v1h-1zM1219 686h1v5h-1zM1220 496h1v191h-1zM1221 546h1v65h-1zM1222 610h1v44h-1zM1223 653h1v26h-1zM1224 678h1v12h-1zM1225 689h1v2h-1zM1226 690h1v1h-1zM1227 690h1v1h-1zM1228 690h1v1h-1zM1229 690h1v1h-1zM1230 690h1v1h-1zM1231 690h1v1h-1zM1232 690h1v1h-1zM1233 690h1v1h-1zM1234 690h1v1h-1zM1235 690h1v1h-1zM1236 690h1v1h-1zM1237 690h1v1h-1zM1238 496h1v195h-1zM1239 536h1v67h-1zM1240 602h1v47h-1zM1241 648h1v29h-1zM1242 676h1v13h-1zM1243 688h1v3h-1zM1244 690h1v1h-1zM1245 690h1v1h-1zM1246 690h1v1h-1zM1247 690h1v1h-1zM1248 690h1v1h-1zM1249 690h1v1h-1zM1250 690h1v1h-1zM1251 690h1v1h-1zM1252 690h1v1h-1zM1253 690h1v1h-1zM1254 690h1v1h-1zM1255 690h1v1h-1zM1256 496h1v195h-1zM1257 524h1v71h-1zM1258 594h1v50h-1zM1259 643h1v31h-1zM1260 673h1v15h-1zM1261 687h1v4h-1zM1262 690h1v1h-1zM1263 690h1v1h-1zM1264 690h1v1h-1zM1265 690h1v1h-1zM1266 690h1v1h-1zM1267 690h1v1h-1zM1268 690h1v1h-1zM1269 690h1v1h-1zM1270 690h1v1h-1zM1271 690h1v1h-1zM1272 690h1v1h-1zM1273 690h1v1h-1zM1274 496h1v195h-1zM1275 512h1v74h-1zM1276 585h1v53h-1zM1277 637h1v33h-1zM1278 669h1v18h-1zM1279 686h1v5h-1zM1280 690h1v1h-1zM1281 690h1v1h-1zM1282 690h1v1h-1zM1283 690h1v1h-1zM1284 690h1v1h-1zM1285 690h1v1h-1zM1286 690h1v1h-1zM1287 690h1v1h-1zM1288 690h1v1h-1zM1289 690h1v1h-1zM1290 690h1v1h-1zM1291 690h1v1h-1zM1292 496h1v195h-1zM1293 500h1v77h-1zM1294 576h1v56h-1zM1295 631h1v36h-1zM1296 666h1v19h-1zM1297 684h1v7h-1zM1298 690h1v1h-1zM1299 690h1v1h-1zM1300 690h1v1h-1zM1301 690h1v1h-1zM1302 690h1v1h-1zM1303 690h1v1h-1zM1304 690h1v1h-1zM1305 690h1v1h-1zM1306 690h1v1h-1zM1307 690h1v1h-1zM1308 690h1v1h-1zM1309 690h1v1h-1zM1310 544h1v147h-1zM1311 496h1v72h-1zM1312 567h1v58h-1zM1313 624h1v39h-1zM1314 662h1v22h-1zM1315 683h1v8h-1zM1316 690h1v1h-1zM1317 690h1v1h-1zM1318 690h1v1h-1zM1319 690h1v1h-1zM1320 690h1v1h-1zM1321 690h1v1h-1zM1322 690h1v1h-1zM1323 690h1v1h-1zM1324 690h1v1h-1zM1325 690h1v1h-1zM1326 690h1v1h-1zM1327 690h1v1h-1zM1328 615h1v76h-1zM1329 496h1v120h-1zM1330 557h1v61h-1zM1331 617h1v42h-1zM1332 658h1v24h-1zM1333 681h1v9h-1zM1334 689h1v2h-1z" fill="#00ff00"/>
</g>
<text x="55.9" y="481.8" font-size="13.5" fill="#c0c0c0" font-weight="bold" text-anchor="end" textLength="39.8" lengthAdjust="spacingAndGlyphs" >5.0KW</text>
<text x="55.9" y="502.8" font-size="13.5" fill="#c0c0c0" font-weight="bold" text-anchor="end" textLength="39.8" lengthAdjust="spacingAndGlyphs" >4.5KW</text>
<text x="55.9" y="524.8" font-size="13.5" fill="#c0c0c0" font-weight="bold" text-anchor="end" textLength="39.8" lengthAdjust="spacingAndGlyphs" >4.0KW</text>
<text x="55.9" y="545.8" font-size="13.5" fill="#c0c0c0" font-weight="bold" text-anchor="end" textLength="39.8" lengthAdjust="spacingAndGlyphs" >3.5KW</text>
<text x="55.9" y="566.8" font-size="13.5" fill="#c0c0c0" font-weight="bold" text-anchor="end" textLength="39.8" lengthAdjust="spacingAndGlyphs" >3.0KW</text>
<text x="55.9" y="587.8" font-size="13.5" fill="#c0c0c0" font-weight="bold" text-anchor="end" textLength="39.8" lengthAdjust="spacingAndGlyphs" >2.5KW</text>
<text x="55.9" y="609.8" font-size="13.5" fill="#c0c0c0" font-weight="bold" text-anchor="end" textLength="39.8" lengthAdjust="spacingAndGlyphs" >2.0KW</text>
<text x="55.9" y="630.8" font-size="13.5" fill="#c0c0c0" font-weight="bold" text-anchor="end" textLength="39.8" lengthAdjust="spacingAndGlyphs" >1.5KW</text>
<text x="55.9" y="651.8" font-size="13.5" fill="#c0c0c0" font-weight="bold" text-anchor="end" textLength="39.8" lengthAdjust="spacingAndGlyphs" >1.0KW</text>
<text x="55.9" y="672.8" font-size="13.5" fill="#c0c0c0" font-weight="bold" text-anchor="end" textLength="39.8" lengthAdjust="spacingAndGlyphs" >0.5KW</text>
<text x="55.9" y="694.8" font-size="13.5" fill="#c0c0c0" font-weight="bold" text-anchor="end" textLength="39.8" lengthAdjust="spacingAndGlyphs" >0.0KW</text>
<text x="55.9" y="715.8" font-size="13.5" fill="#c0c0c0" font-weight="bold" text-anchor="end" textLength="42.7" lengthAdjust="spacingAndGlyphs" >-0.5KW</text>
<text x="64.2" y="731.5" font-size="13.5" fill="#c0c0c0" font-weight="bold" text-anchor="middle" textLength="24.5" lengthAdjust="spacingAndGlyphs" >0ms</text>
<text x="191.2" y="731.5" font-size="13.5" fill="#c0c0c0" font-weight="bold" text-anchor="middle" textLength="31" lengthAdjust="spacingAndGlyphs" >70ms</text>
<text x="318.2" y="731.5" font-size="13.5" fill="#c0c0c0" font-weight="bold" text-anchor="middle" textLength="38.5" lengthAdjust="spacingAndGlyphs" >140ms</text>
<text x="445.2" y="731.5" font-size="13.5" fill="#c0c0c0" font-weight="bold" text-anchor="middle" textLength="38.5" lengthAdjust="spacingAndGlyphs" >210ms</text>
<text x="572.2" y="731.5" font-size="13.5" fill="#c0c0c0" font-weight="bold" text-anchor="middle" textLength="38.5" lengthAdjust="spacingAndGlyphs" >280ms</text>
<text x="699.2" y="731.5" font-size="13.5" fill="#c0c0c0" font-weight="bold" text-anchor="middle" textLength="38.5" lengthAdjust="spacingAndGlyphs" >350ms</text>
<text x="826.2" y="731.5" font-size="13.5" fill="#c0c0c0" font-weight="bold" text-anchor="middle" textLength="38.5" lengthAdjust="spacingAndGlyphs" >420ms</text>
<text x="953.2" y="731.5" font-size="13.5" fill="#c0c0c0" font-weight="bold" text-anchor="middle" textLength="38.5" lengthAdjust="spacingAndGlyphs" >490ms</text>
<text x="1080.2" y="731.5" font-size="13.5" fill="#c0c0c0" font-weight="bold" text-anchor="middle" textLength="38.5" lengthAdjust="spacingAndGlyphs" >560ms</text>
<text x="1207.2" y="731.5" font-size="13.5" fill="#c0c0c0" font-weight="bold" text-anchor="middle" textLength="38.5" lengthAdjust="spacingAndGlyphs" >630ms</text>
<text x="1334.2" y="731.5" font-size="13.5" fill="#c0c0c0" font-weight="bold" text-anchor="middle" textLength="38.5" lengthAdjust="spacingAndGlyphs" >700ms</text>
<text x="642.6" y="472" font-size="13.5" fill="#00ff00" font-weight="bold" text-anchor="start" textLength="113.4" lengthAdjust="spacingAndGlyphs" >V(N001,N002)*I(R1)</text>
</svg>
</body></html>
